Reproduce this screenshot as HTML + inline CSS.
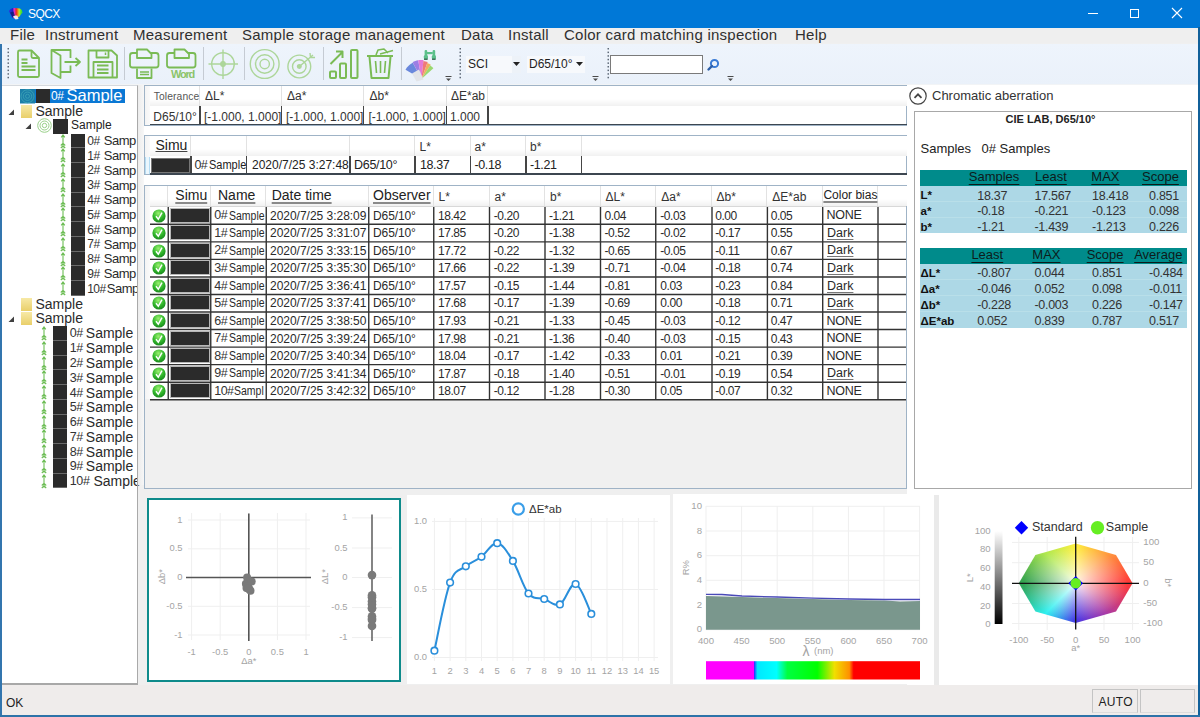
<!DOCTYPE html><html><head><meta charset='utf-8'><style>
*{margin:0;padding:0;box-sizing:border-box}
html,body{width:1200px;height:717px;overflow:hidden;background:#f0f0f0;font-family:"Liberation Sans",sans-serif}
.a{position:absolute}
.t{position:absolute;line-height:1;white-space:nowrap}
.u{text-decoration:underline}
svg{position:absolute;overflow:visible}
</style></head><body><div class="a" style="left:0px;top:0px;width:1200px;height:27.6px;background:#0078d7"></div>
<div class="t " style="left:28px;top:8.04px;font-size:12px;color:#fff;letter-spacing:-0.6px">SQCX</div>
<svg style="left:0;top:0" width="30" height="27" viewBox="0 0 30 27">
<defs><linearGradient id="tig" x1="8.5" x2="22.5" gradientUnits="userSpaceOnUse"><stop offset="0" stop-color="#2a3ae0"/><stop offset="0.3" stop-color="#2020c8"/><stop offset="0.4" stop-color="#e030d8"/><stop offset="0.55" stop-color="#e82828"/><stop offset="0.68" stop-color="#f09010"/><stop offset="0.76" stop-color="#c8e830"/><stop offset="0.9" stop-color="#40e030"/></linearGradient></defs>
<path d="M8.8 11 Q10 8.5 13 8 Q17 7.6 20 8.6 Q22.5 9.8 22.4 12.5 L19.5 16.5 L15.5 19 L12 17.5 Z" fill="url(#tig)"/>
<path d="M10 12.5 L13.5 11.5 L15 16 L12.5 17 Z" fill="#101a70" opacity="0.8"/>
<path d="M13 16.5 Q15.5 14.8 17.5 15.8 L18.5 19 L15.5 19.6 Z" fill="#f0ece8"/>
</svg>
<div class="a" style="left:1088px;top:13px;width:10px;height:1px;background:#fff"></div>
<div class="a" style="left:1129.5px;top:8.5px;width:9px;height:9px;border:1px solid #fff"></div>
<svg style="left:1172px;top:8px" width="10" height="10" viewBox="0 0 10 10"><path d="M0 0L10 10M10 0L0 10" stroke="#fff" stroke-width="1.1"/></svg>
<div class="a" style="left:0px;top:27.6px;width:1200px;height:15.9px;background:#efefef"></div>
<div class="a" style="left:0px;top:43.5px;width:1200px;height:41.5px;background:linear-gradient(180deg,#eef4fc,#eaf1fa)"></div>
<div class="a" style="left:0px;top:83.5px;width:1200px;height:1.5px;background:#f2f4f6"></div>
<svg style="left:6.5px;top:47px" width="3" height="32" viewBox="0 0 3 32"><rect x="0.5" y="1.0" width="1.5" height="1.5" fill="#5f6a78"/><rect x="0.5" y="4.6" width="1.5" height="1.5" fill="#5f6a78"/><rect x="0.5" y="8.2" width="1.5" height="1.5" fill="#5f6a78"/><rect x="0.5" y="11.8" width="1.5" height="1.5" fill="#5f6a78"/><rect x="0.5" y="15.4" width="1.5" height="1.5" fill="#5f6a78"/><rect x="0.5" y="19.0" width="1.5" height="1.5" fill="#5f6a78"/><rect x="0.5" y="22.6" width="1.5" height="1.5" fill="#5f6a78"/><rect x="0.5" y="26.2" width="1.5" height="1.5" fill="#5f6a78"/><rect x="0.5" y="29.8" width="1.5" height="1.5" fill="#5f6a78"/></svg>
<svg style="left:459px;top:47px" width="3" height="32" viewBox="0 0 3 32"><rect x="0.5" y="1.0" width="1.5" height="1.5" fill="#5f6a78"/><rect x="0.5" y="4.6" width="1.5" height="1.5" fill="#5f6a78"/><rect x="0.5" y="8.2" width="1.5" height="1.5" fill="#5f6a78"/><rect x="0.5" y="11.8" width="1.5" height="1.5" fill="#5f6a78"/><rect x="0.5" y="15.4" width="1.5" height="1.5" fill="#5f6a78"/><rect x="0.5" y="19.0" width="1.5" height="1.5" fill="#5f6a78"/><rect x="0.5" y="22.6" width="1.5" height="1.5" fill="#5f6a78"/><rect x="0.5" y="26.2" width="1.5" height="1.5" fill="#5f6a78"/><rect x="0.5" y="29.8" width="1.5" height="1.5" fill="#5f6a78"/></svg>
<svg style="left:606.5px;top:47px" width="3" height="32" viewBox="0 0 3 32"><rect x="0.5" y="1.0" width="1.5" height="1.5" fill="#5f6a78"/><rect x="0.5" y="4.6" width="1.5" height="1.5" fill="#5f6a78"/><rect x="0.5" y="8.2" width="1.5" height="1.5" fill="#5f6a78"/><rect x="0.5" y="11.8" width="1.5" height="1.5" fill="#5f6a78"/><rect x="0.5" y="15.4" width="1.5" height="1.5" fill="#5f6a78"/><rect x="0.5" y="19.0" width="1.5" height="1.5" fill="#5f6a78"/><rect x="0.5" y="22.6" width="1.5" height="1.5" fill="#5f6a78"/><rect x="0.5" y="26.2" width="1.5" height="1.5" fill="#5f6a78"/><rect x="0.5" y="29.8" width="1.5" height="1.5" fill="#5f6a78"/></svg>
<div class="a" style="left:124px;top:47px;width:1px;height:33px;background:#c5cbd3"></div>
<div class="a" style="left:202.5px;top:47px;width:1px;height:33px;background:#c5cbd3"></div>
<div class="a" style="left:243.5px;top:47px;width:1px;height:33px;background:#c5cbd3"></div>
<div class="a" style="left:322.5px;top:47px;width:1px;height:33px;background:#c5cbd3"></div>
<div class="a" style="left:401px;top:47px;width:1px;height:33px;background:#c5cbd3"></div>
<svg style="left:0;top:0" width="1200" height="85" viewBox="0 0 1200 85" fill="none" stroke="#7abb55" stroke-width="1.8" stroke-linejoin="round"><path d="M19.5 50.5 H31.5 L39 58 V75.5 Q39 77 37.5 77 H19.5 Q18 77 18 75.5 V52 Q18 50.5 19.5 50.5 Z"/><path d="M31.5 50.5 V56.5 Q31.5 58 33 58 H39"/><path d="M21.5 59.5 H27.5 M21.5 63 H27.5 M21.5 66.5 H35.5 M21.5 70 H35.5"/><path d="M51.5 50 H70.5 V58 M70.5 65.5 V72 H60.5"/><path d="M51.5 50 L60.5 55.5 V78 L51.5 73 Z"/><path d="M64.5 62 H80 M75.5 58 L80 62 L75.5 66"/><path d="M88.5 50.5 H111.5 L117 55.5 V77.5 H88.5 Z"/><path d="M96.5 50.5 V57.5 H108.5 V50.5"/><path d="M93.5 77.5 V62 H112.5 V77.5"/><path d="M97 65.5 H108.5 M97 69.5 H108.5 M97 73 H108.5"/><path d="M105.5 52.5 V55" stroke-width="1.5"/><rect x="130" y="53" width="28.5" height="14.5" rx="2.5"/><path d="M137 58 V49.5 H147 L151.5 54 V58 Z" fill="#eef3fa"/><path d="M137 68.5 V78 H151.5 V68.5"/><path d="M140 72 H149 M140 74.5 H149" stroke-width="1.3"/><rect x="167" y="53" width="28.5" height="14.5" rx="2.5"/><path d="M174.5 58 V49.5 H184.5 L189 54 V58 Z" fill="#eef3fa"/></svg>
<div class="t " style="left:171px;top:69.29px;font-size:11px;color:#8cc46a;font-weight:bold;letter-spacing:-1.2px">Word</div>
<svg style="left:0;top:0" width="1200" height="85" viewBox="0 0 1200 85" fill="none" stroke="#add69a" stroke-width="1.4"><circle cx="223" cy="64" r="11.3"/><path d="M208.5 64 H238 M223 49.5 V79"/><circle cx="223" cy="64" r="2.2" fill="#add69a"/><circle cx="264.7" cy="64" r="14.4"/><circle cx="264.7" cy="64" r="9.2"/><circle cx="264.7" cy="64" r="4.7"/><circle cx="299.3" cy="66.5" r="11.4"/><circle cx="299.3" cy="66.5" r="6.8"/><circle cx="299.3" cy="66.5" r="1.8" fill="#add69a"/><path d="M299.3 66.5 L313 55 M310 53 L310.5 57.5 L315 57.5"/></svg>
<svg style="left:0;top:0" width="1200" height="85" viewBox="0 0 1200 85" fill="none" stroke="#7abb55" stroke-width="2" stroke-linejoin="round"><rect x="330" y="71.5" width="6" height="6.5" rx="1"/><rect x="340" y="63.5" width="6" height="14.5" rx="1"/><rect x="351" y="50" width="6.5" height="28" rx="1"/><path d="M330.5 64 L342.5 52 M336 51.5 H342.5 V58"/><path d="M367 56 H393" /><path d="M376 55 L378 50 L384 49 L388 53 M380 54 L393 50.5" stroke-width="1.6"/><path d="M369.5 57 L371.5 78 H388.5 L390.5 57"/><path d="M375.5 61 L376.5 73 M380.5 61 V73 M385.5 61 L384.5 73" stroke-width="1.6"/></svg>
<svg style="left:0;top:0" width="1200" height="85" viewBox="0 0 1200 85"><path d="M421.5 79.0 L405.5 69.8 L406.9 67.6 L408.6 65.7 L410.6 64.0 L412.8 62.7 Z" fill="#6a88dc"/><path d="M421.5 79.0 L412.6 62.2 L413.9 61.6 L415.3 61.0 L416.7 60.6 L418.2 60.3 Z" fill="#9c7ee4"/><path d="M421.5 79.0 L418.2 60.3 L419.5 60.1 L420.8 60.0 L422.2 60.0 L423.5 60.1 Z" fill="#e47ad8"/><path d="M421.5 79.0 L423.4 61.1 L424.5 61.2 L425.5 61.5 L426.6 61.7 L427.7 62.1 Z" fill="#f0787a"/><path d="M421.5 79.0 L427.3 63.0 L428.2 63.4 L429.1 63.8 L429.9 64.2 L430.8 64.7 Z" fill="#f0b060"/><path d="M421.5 79.0 L430.2 65.6 L431.1 66.2 L431.9 66.8 L432.7 67.5 L433.4 68.3 Z" fill="#9ad870"/><path d="M412 73.5 L419 69.5 L423.5 79.5 L416.5 81.5 Z" fill="#e2e4e8"/><g fill="#5cc08a"><rect x="424.6" y="50" width="2.6" height="8" rx="1"/><rect x="432.6" y="50" width="2.6" height="8" rx="1"/><rect x="423.8" y="55" width="4.2" height="4.5" rx="1.6"/><rect x="431.8" y="55" width="4.2" height="4.5" rx="1.6"/><rect x="427" y="52" width="5.8" height="2.2"/></g><g fill="#2d5a48"><rect x="424" y="58.6" width="3.6" height="1.2"/><rect x="432" y="58.6" width="3.6" height="1.2"/></g></svg>
<svg style="left:444.7px;top:75px" width="7" height="7" viewBox="0 0 7 7"><path d="M0.5 1.5H6.5" stroke="#4a4a4a" stroke-width="1"/><path d="M1 3.5H6L3.5 6Z" fill="#4a4a4a"/></svg>
<svg style="left:592px;top:75px" width="7" height="7" viewBox="0 0 7 7"><path d="M0.5 1.5H6.5" stroke="#4a4a4a" stroke-width="1"/><path d="M1 3.5H6L3.5 6Z" fill="#4a4a4a"/></svg>
<svg style="left:727px;top:75px" width="7" height="7" viewBox="0 0 7 7"><path d="M0.5 1.5H6.5" stroke="#4a4a4a" stroke-width="1"/><path d="M1 3.5H6L3.5 6Z" fill="#4a4a4a"/></svg>
<div class="a" style="left:465.5px;top:55.5px;width:55px;height:17.5px;background:#f7f9fc"></div>
<div class="a" style="left:512px;top:55.5px;width:8.5px;height:17.5px;background:#edf2f8"></div>
<div class="t " style="left:468px;top:58.34px;font-size:12px;color:#1e1e1e;">SCI</div>
<svg style="left:513px;top:62px" width="7" height="4" viewBox="0 0 7 4"><path d="M0 0H7L3.5 4Z" fill="#222"/></svg>
<div class="a" style="left:527px;top:55.5px;width:57.5px;height:17.5px;background:#f7f9fc"></div>
<div class="t " style="left:529px;top:58.34px;font-size:12px;color:#1e1e1e;">D65/10°</div>
<svg style="left:576px;top:62px" width="7" height="4" viewBox="0 0 7 4"><path d="M0 0H7L3.5 4Z" fill="#222"/></svg>
<div class="a" style="left:610px;top:55px;width:92.5px;height:18.5px;background:#fff;border:1px solid #7a7a7a"></div>
<svg style="left:707px;top:58px" width="13" height="13" viewBox="0 0 13 13"><circle cx="7.5" cy="5.5" r="3.6" fill="none" stroke="#3a7bd5" stroke-width="2"/><path d="M5 8 L1.5 11.5" stroke="#2d5fa8" stroke-width="2.4" stroke-linecap="round"/></svg>
<div class="a" style="left:2px;top:85px;width:136px;height:600px;background:#fff;border-top:1px solid #d5d9de;border-right:1px solid #a9a9a9;border-bottom:2px solid #a8a8a8"></div>
<div class="a" style="left:19.5px;top:88.5px;width:105.5px;height:14.5px;background:#0a78d4"></div>
<svg style="left:20px;top:88.5px" width="15" height="14.5" viewBox="0 0 15 14.5" fill="none" stroke="#3aa0b5" stroke-width="0.9"><rect width="15" height="14.5" fill="#1b7fa8" stroke="none"/><circle cx="7.5" cy="7.25" r="6.5"/><circle cx="7.5" cy="7.25" r="4.2"/><circle cx="7.5" cy="7.25" r="2"/></svg>
<div class="a" style="left:35.5px;top:88.5px;width:14.5px;height:14.5px;background:#2b2b2b"></div>
<div class="t " style="left:51px;top:90.34px;font-size:12px;color:#fff;letter-spacing:-0.5px">0#</div>
<div class="t " style="left:66.5px;top:87.03px;font-size:16.5px;color:#fff;">Sample</div>
<svg style="left:7.5px;top:109px" width="7" height="7" viewBox="0 0 7 7"><path d="M6 0.5 V6 H0.5 Z" fill="#404040"/></svg>
<div class="a" style="left:20.5px;top:104.5px;width:11.5px;height:13px;background:linear-gradient(180deg,#f7e9a6,#e9cf6a)"></div>
<div class="t " style="left:35.5px;top:103.95px;font-size:14px;color:#2b2b2b;">Sample</div>
<svg style="left:24.5px;top:123px" width="7" height="7" viewBox="0 0 7 7"><path d="M6 0.5 V6 H0.5 Z" fill="#404040"/></svg>
<svg style="left:37px;top:118px" width="15" height="15" viewBox="0 0 15 15" fill="none" stroke="#9ad18a" stroke-width="1"><circle cx="7.5" cy="7.5" r="6.8"/><circle cx="7.5" cy="7.5" r="4.5"/><circle cx="7.5" cy="7.5" r="2.2"/></svg>
<div class="a" style="left:53px;top:119px;width:14.5px;height:14.5px;background:#2b2b2b"></div>
<div class="t " style="left:71px;top:119.34px;font-size:12px;color:#222;">Sample</div>
<svg style="left:59.5px;top:133.5px" width="6" height="15" viewBox="0 0 6 15" fill="none" stroke="#6dbd55" stroke-width="1.1"><path d="M3 1 V13.5 M1.2 3.3 L3 1 L4.8 3.3 M0.8 11.5 L3 9.3 L5.2 11.5 M0.8 14 L3 11.8 L5.2 14"/></svg>
<div class="a" style="left:70.5px;top:133.5px;width:14.3px;height:14.77px;background:#2b2b2b;border-bottom:1px solid #6a6a6a"></div>
<div class="t " style="left:87.3px;top:134.94px;font-size:12px;color:#333;letter-spacing:-0.4px">0#</div>
<div class="t " style="left:103.8px;top:134.30px;font-size:13px;color:#2a2a2a;letter-spacing:-0.5px">Samp</div>
<svg style="left:59.5px;top:148.27px" width="6" height="15" viewBox="0 0 6 15" fill="none" stroke="#6dbd55" stroke-width="1.1"><path d="M3 1 V13.5 M1.2 3.3 L3 1 L4.8 3.3 M0.8 11.5 L3 9.3 L5.2 11.5 M0.8 14 L3 11.8 L5.2 14"/></svg>
<div class="a" style="left:70.5px;top:148.27px;width:14.3px;height:14.77px;background:#2b2b2b;border-bottom:1px solid #6a6a6a"></div>
<div class="t " style="left:87.3px;top:149.71px;font-size:12px;color:#333;letter-spacing:-0.4px">1#</div>
<div class="t " style="left:103.8px;top:149.07px;font-size:13px;color:#2a2a2a;letter-spacing:-0.5px">Samp</div>
<svg style="left:59.5px;top:163.04px" width="6" height="15" viewBox="0 0 6 15" fill="none" stroke="#6dbd55" stroke-width="1.1"><path d="M3 1 V13.5 M1.2 3.3 L3 1 L4.8 3.3 M0.8 11.5 L3 9.3 L5.2 11.5 M0.8 14 L3 11.8 L5.2 14"/></svg>
<div class="a" style="left:70.5px;top:163.04px;width:14.3px;height:14.77px;background:#2b2b2b;border-bottom:1px solid #6a6a6a"></div>
<div class="t " style="left:87.3px;top:164.48px;font-size:12px;color:#333;letter-spacing:-0.4px">2#</div>
<div class="t " style="left:103.8px;top:163.84px;font-size:13px;color:#2a2a2a;letter-spacing:-0.5px">Samp</div>
<svg style="left:59.5px;top:177.81px" width="6" height="15" viewBox="0 0 6 15" fill="none" stroke="#6dbd55" stroke-width="1.1"><path d="M3 1 V13.5 M1.2 3.3 L3 1 L4.8 3.3 M0.8 11.5 L3 9.3 L5.2 11.5 M0.8 14 L3 11.8 L5.2 14"/></svg>
<div class="a" style="left:70.5px;top:177.81px;width:14.3px;height:14.77px;background:#2b2b2b;border-bottom:1px solid #6a6a6a"></div>
<div class="t " style="left:87.3px;top:179.25px;font-size:12px;color:#333;letter-spacing:-0.4px">3#</div>
<div class="t " style="left:103.8px;top:178.61px;font-size:13px;color:#2a2a2a;letter-spacing:-0.5px">Samp</div>
<svg style="left:59.5px;top:192.57999999999998px" width="6" height="15" viewBox="0 0 6 15" fill="none" stroke="#6dbd55" stroke-width="1.1"><path d="M3 1 V13.5 M1.2 3.3 L3 1 L4.8 3.3 M0.8 11.5 L3 9.3 L5.2 11.5 M0.8 14 L3 11.8 L5.2 14"/></svg>
<div class="a" style="left:70.5px;top:192.57999999999998px;width:14.3px;height:14.77px;background:#2b2b2b;border-bottom:1px solid #6a6a6a"></div>
<div class="t " style="left:87.3px;top:194.02px;font-size:12px;color:#333;letter-spacing:-0.4px">4#</div>
<div class="t " style="left:103.8px;top:193.38px;font-size:13px;color:#2a2a2a;letter-spacing:-0.5px">Samp</div>
<svg style="left:59.5px;top:207.35px" width="6" height="15" viewBox="0 0 6 15" fill="none" stroke="#6dbd55" stroke-width="1.1"><path d="M3 1 V13.5 M1.2 3.3 L3 1 L4.8 3.3 M0.8 11.5 L3 9.3 L5.2 11.5 M0.8 14 L3 11.8 L5.2 14"/></svg>
<div class="a" style="left:70.5px;top:207.35px;width:14.3px;height:14.77px;background:#2b2b2b;border-bottom:1px solid #6a6a6a"></div>
<div class="t " style="left:87.3px;top:208.79px;font-size:12px;color:#333;letter-spacing:-0.4px">5#</div>
<div class="t " style="left:103.8px;top:208.15px;font-size:13px;color:#2a2a2a;letter-spacing:-0.5px">Samp</div>
<svg style="left:59.5px;top:222.12px" width="6" height="15" viewBox="0 0 6 15" fill="none" stroke="#6dbd55" stroke-width="1.1"><path d="M3 1 V13.5 M1.2 3.3 L3 1 L4.8 3.3 M0.8 11.5 L3 9.3 L5.2 11.5 M0.8 14 L3 11.8 L5.2 14"/></svg>
<div class="a" style="left:70.5px;top:222.12px;width:14.3px;height:14.77px;background:#2b2b2b;border-bottom:1px solid #6a6a6a"></div>
<div class="t " style="left:87.3px;top:223.56px;font-size:12px;color:#333;letter-spacing:-0.4px">6#</div>
<div class="t " style="left:103.8px;top:222.92px;font-size:13px;color:#2a2a2a;letter-spacing:-0.5px">Samp</div>
<svg style="left:59.5px;top:236.89px" width="6" height="15" viewBox="0 0 6 15" fill="none" stroke="#6dbd55" stroke-width="1.1"><path d="M3 1 V13.5 M1.2 3.3 L3 1 L4.8 3.3 M0.8 11.5 L3 9.3 L5.2 11.5 M0.8 14 L3 11.8 L5.2 14"/></svg>
<div class="a" style="left:70.5px;top:236.89px;width:14.3px;height:14.77px;background:#2b2b2b;border-bottom:1px solid #6a6a6a"></div>
<div class="t " style="left:87.3px;top:238.33px;font-size:12px;color:#333;letter-spacing:-0.4px">7#</div>
<div class="t " style="left:103.8px;top:237.69px;font-size:13px;color:#2a2a2a;letter-spacing:-0.5px">Samp</div>
<svg style="left:59.5px;top:251.66px" width="6" height="15" viewBox="0 0 6 15" fill="none" stroke="#6dbd55" stroke-width="1.1"><path d="M3 1 V13.5 M1.2 3.3 L3 1 L4.8 3.3 M0.8 11.5 L3 9.3 L5.2 11.5 M0.8 14 L3 11.8 L5.2 14"/></svg>
<div class="a" style="left:70.5px;top:251.66px;width:14.3px;height:14.77px;background:#2b2b2b;border-bottom:1px solid #6a6a6a"></div>
<div class="t " style="left:87.3px;top:253.10px;font-size:12px;color:#333;letter-spacing:-0.4px">8#</div>
<div class="t " style="left:103.8px;top:252.46px;font-size:13px;color:#2a2a2a;letter-spacing:-0.5px">Samp</div>
<svg style="left:59.5px;top:266.43px" width="6" height="15" viewBox="0 0 6 15" fill="none" stroke="#6dbd55" stroke-width="1.1"><path d="M3 1 V13.5 M1.2 3.3 L3 1 L4.8 3.3 M0.8 11.5 L3 9.3 L5.2 11.5 M0.8 14 L3 11.8 L5.2 14"/></svg>
<div class="a" style="left:70.5px;top:266.43px;width:14.3px;height:14.77px;background:#2b2b2b;border-bottom:1px solid #6a6a6a"></div>
<div class="t " style="left:87.3px;top:267.87px;font-size:12px;color:#333;letter-spacing:-0.4px">9#</div>
<div class="t " style="left:103.8px;top:267.23px;font-size:13px;color:#2a2a2a;letter-spacing:-0.5px">Samp</div>
<svg style="left:59.5px;top:281.2px" width="6" height="15" viewBox="0 0 6 15" fill="none" stroke="#6dbd55" stroke-width="1.1"><path d="M3 1 V13.5 M1.2 3.3 L3 1 L4.8 3.3 M0.8 11.5 L3 9.3 L5.2 11.5 M0.8 14 L3 11.8 L5.2 14"/></svg>
<div class="a" style="left:70.5px;top:281.2px;width:14.3px;height:14.77px;background:#2b2b2b;border-bottom:1px solid #6a6a6a"></div>
<div class="t " style="left:87.3px;top:282.64px;font-size:12px;color:#333;letter-spacing:-0.6px">10#</div>
<div class="t " style="left:106.8px;top:282.00px;font-size:13px;color:#2a2a2a;letter-spacing:-0.5px">Samp</div>
<div class="a" style="left:20.5px;top:297.5px;width:11.5px;height:13px;background:linear-gradient(180deg,#f7e9a6,#e9cf6a)"></div>
<div class="t " style="left:35.5px;top:296.75px;font-size:14px;color:#2b2b2b;">Sample</div>
<svg style="left:7.5px;top:315.5px" width="7" height="7" viewBox="0 0 7 7"><path d="M6 0.5 V6 H0.5 Z" fill="#404040"/></svg>
<div class="a" style="left:20.5px;top:312px;width:11.5px;height:13px;background:linear-gradient(180deg,#f7e9a6,#e9cf6a)"></div>
<div class="t " style="left:35.5px;top:311.45px;font-size:14px;color:#2b2b2b;">Sample</div>
<svg style="left:41px;top:326.0px" width="6" height="15" viewBox="0 0 6 15" fill="none" stroke="#6dbd55" stroke-width="1.1"><path d="M3 1 V13.5 M1.2 3.3 L3 1 L4.8 3.3 M0.8 11.5 L3 9.3 L5.2 11.5 M0.8 14 L3 11.8 L5.2 14"/></svg>
<div class="a" style="left:53px;top:326.0px;width:14.3px;height:14.77px;background:#2b2b2b;border-bottom:1px solid #6a6a6a"></div>
<div class="t " style="left:69.8px;top:327.42px;font-size:12.5px;color:#333;letter-spacing:-0.4px">0#</div>
<div class="t " style="left:85.8px;top:326.45px;font-size:14px;color:#2a2a2a;">Sample</div>
<svg style="left:41px;top:340.77px" width="6" height="15" viewBox="0 0 6 15" fill="none" stroke="#6dbd55" stroke-width="1.1"><path d="M3 1 V13.5 M1.2 3.3 L3 1 L4.8 3.3 M0.8 11.5 L3 9.3 L5.2 11.5 M0.8 14 L3 11.8 L5.2 14"/></svg>
<div class="a" style="left:53px;top:340.77px;width:14.3px;height:14.77px;background:#2b2b2b;border-bottom:1px solid #6a6a6a"></div>
<div class="t " style="left:69.8px;top:342.19px;font-size:12.5px;color:#333;letter-spacing:-0.4px">1#</div>
<div class="t " style="left:85.8px;top:341.22px;font-size:14px;color:#2a2a2a;">Sample</div>
<svg style="left:41px;top:355.54px" width="6" height="15" viewBox="0 0 6 15" fill="none" stroke="#6dbd55" stroke-width="1.1"><path d="M3 1 V13.5 M1.2 3.3 L3 1 L4.8 3.3 M0.8 11.5 L3 9.3 L5.2 11.5 M0.8 14 L3 11.8 L5.2 14"/></svg>
<div class="a" style="left:53px;top:355.54px;width:14.3px;height:14.77px;background:#2b2b2b;border-bottom:1px solid #6a6a6a"></div>
<div class="t " style="left:69.8px;top:356.96px;font-size:12.5px;color:#333;letter-spacing:-0.4px">2#</div>
<div class="t " style="left:85.8px;top:355.99px;font-size:14px;color:#2a2a2a;">Sample</div>
<svg style="left:41px;top:370.31px" width="6" height="15" viewBox="0 0 6 15" fill="none" stroke="#6dbd55" stroke-width="1.1"><path d="M3 1 V13.5 M1.2 3.3 L3 1 L4.8 3.3 M0.8 11.5 L3 9.3 L5.2 11.5 M0.8 14 L3 11.8 L5.2 14"/></svg>
<div class="a" style="left:53px;top:370.31px;width:14.3px;height:14.77px;background:#2b2b2b;border-bottom:1px solid #6a6a6a"></div>
<div class="t " style="left:69.8px;top:371.73px;font-size:12.5px;color:#333;letter-spacing:-0.4px">3#</div>
<div class="t " style="left:85.8px;top:370.76px;font-size:14px;color:#2a2a2a;">Sample</div>
<svg style="left:41px;top:385.08px" width="6" height="15" viewBox="0 0 6 15" fill="none" stroke="#6dbd55" stroke-width="1.1"><path d="M3 1 V13.5 M1.2 3.3 L3 1 L4.8 3.3 M0.8 11.5 L3 9.3 L5.2 11.5 M0.8 14 L3 11.8 L5.2 14"/></svg>
<div class="a" style="left:53px;top:385.08px;width:14.3px;height:14.77px;background:#2b2b2b;border-bottom:1px solid #6a6a6a"></div>
<div class="t " style="left:69.8px;top:386.50px;font-size:12.5px;color:#333;letter-spacing:-0.4px">4#</div>
<div class="t " style="left:85.8px;top:385.53px;font-size:14px;color:#2a2a2a;">Sample</div>
<svg style="left:41px;top:399.85px" width="6" height="15" viewBox="0 0 6 15" fill="none" stroke="#6dbd55" stroke-width="1.1"><path d="M3 1 V13.5 M1.2 3.3 L3 1 L4.8 3.3 M0.8 11.5 L3 9.3 L5.2 11.5 M0.8 14 L3 11.8 L5.2 14"/></svg>
<div class="a" style="left:53px;top:399.85px;width:14.3px;height:14.77px;background:#2b2b2b;border-bottom:1px solid #6a6a6a"></div>
<div class="t " style="left:69.8px;top:401.27px;font-size:12.5px;color:#333;letter-spacing:-0.4px">5#</div>
<div class="t " style="left:85.8px;top:400.30px;font-size:14px;color:#2a2a2a;">Sample</div>
<svg style="left:41px;top:414.62px" width="6" height="15" viewBox="0 0 6 15" fill="none" stroke="#6dbd55" stroke-width="1.1"><path d="M3 1 V13.5 M1.2 3.3 L3 1 L4.8 3.3 M0.8 11.5 L3 9.3 L5.2 11.5 M0.8 14 L3 11.8 L5.2 14"/></svg>
<div class="a" style="left:53px;top:414.62px;width:14.3px;height:14.77px;background:#2b2b2b;border-bottom:1px solid #6a6a6a"></div>
<div class="t " style="left:69.8px;top:416.04px;font-size:12.5px;color:#333;letter-spacing:-0.4px">6#</div>
<div class="t " style="left:85.8px;top:415.07px;font-size:14px;color:#2a2a2a;">Sample</div>
<svg style="left:41px;top:429.39px" width="6" height="15" viewBox="0 0 6 15" fill="none" stroke="#6dbd55" stroke-width="1.1"><path d="M3 1 V13.5 M1.2 3.3 L3 1 L4.8 3.3 M0.8 11.5 L3 9.3 L5.2 11.5 M0.8 14 L3 11.8 L5.2 14"/></svg>
<div class="a" style="left:53px;top:429.39px;width:14.3px;height:14.77px;background:#2b2b2b;border-bottom:1px solid #6a6a6a"></div>
<div class="t " style="left:69.8px;top:430.81px;font-size:12.5px;color:#333;letter-spacing:-0.4px">7#</div>
<div class="t " style="left:85.8px;top:429.84px;font-size:14px;color:#2a2a2a;">Sample</div>
<svg style="left:41px;top:444.15999999999997px" width="6" height="15" viewBox="0 0 6 15" fill="none" stroke="#6dbd55" stroke-width="1.1"><path d="M3 1 V13.5 M1.2 3.3 L3 1 L4.8 3.3 M0.8 11.5 L3 9.3 L5.2 11.5 M0.8 14 L3 11.8 L5.2 14"/></svg>
<div class="a" style="left:53px;top:444.15999999999997px;width:14.3px;height:14.77px;background:#2b2b2b;border-bottom:1px solid #6a6a6a"></div>
<div class="t " style="left:69.8px;top:445.58px;font-size:12.5px;color:#333;letter-spacing:-0.4px">8#</div>
<div class="t " style="left:85.8px;top:444.61px;font-size:14px;color:#2a2a2a;">Sample</div>
<svg style="left:41px;top:458.93px" width="6" height="15" viewBox="0 0 6 15" fill="none" stroke="#6dbd55" stroke-width="1.1"><path d="M3 1 V13.5 M1.2 3.3 L3 1 L4.8 3.3 M0.8 11.5 L3 9.3 L5.2 11.5 M0.8 14 L3 11.8 L5.2 14"/></svg>
<div class="a" style="left:53px;top:458.93px;width:14.3px;height:14.77px;background:#2b2b2b;border-bottom:1px solid #6a6a6a"></div>
<div class="t " style="left:69.8px;top:460.35px;font-size:12.5px;color:#333;letter-spacing:-0.4px">9#</div>
<div class="t " style="left:85.8px;top:459.38px;font-size:14px;color:#2a2a2a;">Sample</div>
<svg style="left:41px;top:473.7px" width="6" height="15" viewBox="0 0 6 15" fill="none" stroke="#6dbd55" stroke-width="1.1"><path d="M3 1 V13.5 M1.2 3.3 L3 1 L4.8 3.3 M0.8 11.5 L3 9.3 L5.2 11.5 M0.8 14 L3 11.8 L5.2 14"/></svg>
<div class="a" style="left:53px;top:473.7px;width:14.3px;height:14.77px;background:#2b2b2b;border-bottom:1px solid #6a6a6a"></div>
<div class="t " style="left:69.8px;top:475.12px;font-size:12.5px;color:#333;letter-spacing:-0.4px">10#</div>
<div class="t " style="left:93.4px;top:474.15px;font-size:14px;color:#2a2a2a;">Sample</div>
<div class="a" style="left:137px;top:86px;width:1px;height:598px;background:#a9a9a9"></div>
<div class="a" style="left:138px;top:85px;width:769px;height:400px;background:#fff"></div>
<div class="a" style="left:138px;top:85px;width:5.5px;height:400px;background:linear-gradient(90deg,#ececec,#f7f7f7)"></div>
<div class="a" style="left:143.5px;top:85.25px;width:763.5px;height:40.25px;background:#fff;border:1px solid #9fb3c6"></div>
<div class="a" style="left:144.5px;top:86.25px;width:5.5px;height:38.25px;background:linear-gradient(90deg,#f4f4f4,#fafafa)"></div>
<div class="a" style="left:150px;top:86.25px;width:757px;height:19.75px;background:linear-gradient(180deg,#fff 65%,#f1f1f1)"></div>
<div class="a" style="left:199.4px;top:86.25px;width:1px;height:19.75px;background:#e2e2e2"></div>
<div class="a" style="left:199.4px;top:106px;width:1.3px;height:18.5px;background:#454545"></div>
<div class="a" style="left:280.7px;top:86.25px;width:1px;height:19.75px;background:#e2e2e2"></div>
<div class="a" style="left:280.7px;top:106px;width:1.3px;height:18.5px;background:#454545"></div>
<div class="a" style="left:363px;top:86.25px;width:1px;height:19.75px;background:#e2e2e2"></div>
<div class="a" style="left:363px;top:106px;width:1.3px;height:18.5px;background:#454545"></div>
<div class="a" style="left:445.7px;top:86.25px;width:1px;height:19.75px;background:#e2e2e2"></div>
<div class="a" style="left:445.7px;top:106px;width:1.3px;height:18.5px;background:#454545"></div>
<div class="a" style="left:487.3px;top:86.25px;width:1px;height:19.75px;background:#e2e2e2"></div>
<div class="a" style="left:487.3px;top:106px;width:1.3px;height:18.5px;background:#454545"></div>
<div class="a" style="left:150px;top:123.5px;width:757px;height:1.5px;background:#3c4650"></div>
<div class="t " style="left:153.8px;top:91.68px;font-size:10.3px;color:#555;letter-spacing:0.1px">Tolerance</div>
<div class="t " style="left:205px;top:90.24px;font-size:12px;color:#333;">ΔL*</div>
<div class="t " style="left:287px;top:90.24px;font-size:12px;color:#333;">Δa*</div>
<div class="t " style="left:369.5px;top:90.24px;font-size:12px;color:#333;">Δb*</div>
<div class="t " style="left:451px;top:90.24px;font-size:12px;color:#333;">ΔE*ab</div>
<div class="t " style="left:153.3px;top:110.64px;font-size:12px;color:#333;">D65/10°</div>
<div class="t " style="left:204px;top:110.64px;font-size:12px;color:#333;">[-1.000, 1.000]</div>
<div class="t " style="left:286px;top:110.64px;font-size:12px;color:#333;">[-1.000, 1.000]</div>
<div class="t " style="left:368.5px;top:110.64px;font-size:12px;color:#333;">[-1.000, 1.000]</div>
<div class="t " style="left:450px;top:110.64px;font-size:12px;color:#333;">1.000</div>
<div class="a" style="left:143.5px;top:135.3px;width:763.5px;height:40px;background:#fff;border:1px solid #9fb3c6"></div>
<div class="a" style="left:144.5px;top:136.3px;width:5.5px;height:38px;background:linear-gradient(90deg,#f4f4f4,#fafafa)"></div>
<div class="a" style="left:150px;top:136.3px;width:757px;height:20px;background:linear-gradient(180deg,#fff 65%,#f1f1f1)"></div>
<div class="a" style="left:190.3px;top:136.3px;width:1px;height:20px;background:#e2e2e2"></div>
<div class="a" style="left:190.3px;top:156.3px;width:1.3px;height:18px;background:#454545"></div>
<div class="a" style="left:246.2px;top:136.3px;width:1px;height:20px;background:#e2e2e2"></div>
<div class="a" style="left:246.2px;top:156.3px;width:1.3px;height:18px;background:#454545"></div>
<div class="a" style="left:349.3px;top:136.3px;width:1px;height:20px;background:#e2e2e2"></div>
<div class="a" style="left:349.3px;top:156.3px;width:1.3px;height:18px;background:#454545"></div>
<div class="a" style="left:414.3px;top:136.3px;width:1px;height:20px;background:#e2e2e2"></div>
<div class="a" style="left:414.3px;top:156.3px;width:1.3px;height:18px;background:#454545"></div>
<div class="a" style="left:469.8px;top:136.3px;width:1px;height:20px;background:#e2e2e2"></div>
<div class="a" style="left:469.8px;top:156.3px;width:1.3px;height:18px;background:#454545"></div>
<div class="a" style="left:525.3px;top:136.3px;width:1px;height:20px;background:#e2e2e2"></div>
<div class="a" style="left:525.3px;top:156.3px;width:1.3px;height:18px;background:#454545"></div>
<div class="a" style="left:580.7px;top:136.3px;width:1px;height:20px;background:#e2e2e2"></div>
<div class="a" style="left:580.7px;top:156.3px;width:1.3px;height:18px;background:#454545"></div>
<div class="a" style="left:150px;top:173.3px;width:757px;height:1.5px;background:#3c4650"></div>
<div class="t " style="left:155.5px;top:138.45px;font-size:14px;color:#222;text-decoration:underline;text-decoration-color:#444;text-decoration-thickness:1px;text-underline-offset:1.4px">Simu</div>
<div class="a" style="left:144.5px;top:156.5px;width:5.5px;height:17.5px;background:#eaf6fd;border-left:1px solid #b5dcf3;border-right:1px solid #b5dcf3"></div>
<div class="a" style="left:151px;top:157.5px;width:39px;height:15px;background:#2b2b2b;border:1px solid #777"></div>
<div class="t " style="left:194.5px;top:158.72px;font-size:12.5px;color:#333;letter-spacing:-0.6px">0#</div>
<div class="t " style="left:208.5px;top:158.92px;font-size:12.5px;color:#222;transform:scaleX(0.88);transform-origin:left">Sample</div>
<div class="t " style="left:252px;top:159.24px;font-size:12px;color:#222;letter-spacing:0px">2020/7/25 3:27:48</div>
<div class="t " style="left:354px;top:158.82px;font-size:12.5px;color:#222;letter-spacing:-0.3px">D65/10°</div>
<div class="t " style="left:420px;top:158.82px;font-size:12.5px;color:#222;letter-spacing:-0.4px">18.37</div>
<div class="t " style="left:474.5px;top:158.82px;font-size:12.5px;color:#222;letter-spacing:-0.4px">-0.18</div>
<div class="t " style="left:530px;top:158.82px;font-size:12.5px;color:#222;letter-spacing:-0.4px">-1.21</div>
<div class="t " style="left:419.5px;top:140.84px;font-size:12px;color:#333;">L*</div>
<div class="t " style="left:474.5px;top:140.84px;font-size:12px;color:#333;">a*</div>
<div class="t " style="left:530px;top:140.84px;font-size:12px;color:#333;">b*</div>
<div class="a" style="left:143.5px;top:185px;width:763.5px;height:303.5px;background:#f0f0f0;border:1px solid #9fb3c6"></div>
<div class="a" style="left:144.5px;top:186px;width:762.5px;height:20.4px;background:linear-gradient(180deg,#fff 65%,#f1f1f1)"></div>
<div class="a" style="left:144.5px;top:186px;width:5.5px;height:213px;background:linear-gradient(90deg,#f4f4f4,#fafafa)"></div>
<div class="a" style="left:167.25px;top:186px;width:1px;height:20.4px;background:#e2e2e2"></div>
<div class="a" style="left:209.75px;top:186px;width:1px;height:20.4px;background:#e2e2e2"></div>
<div class="a" style="left:265.25px;top:186px;width:1px;height:20.4px;background:#e2e2e2"></div>
<div class="a" style="left:367.75px;top:186px;width:1px;height:20.4px;background:#e2e2e2"></div>
<div class="a" style="left:432.75px;top:186px;width:1px;height:20.4px;background:#e2e2e2"></div>
<div class="a" style="left:488.5px;top:186px;width:1px;height:20.4px;background:#e2e2e2"></div>
<div class="a" style="left:544px;top:186px;width:1px;height:20.4px;background:#e2e2e2"></div>
<div class="a" style="left:599.5px;top:186px;width:1px;height:20.4px;background:#e2e2e2"></div>
<div class="a" style="left:654.75px;top:186px;width:1px;height:20.4px;background:#e2e2e2"></div>
<div class="a" style="left:711px;top:186px;width:1px;height:20.4px;background:#e2e2e2"></div>
<div class="a" style="left:766.4px;top:186px;width:1px;height:20.4px;background:#e2e2e2"></div>
<div class="a" style="left:821.7px;top:186px;width:1px;height:20.4px;background:#e2e2e2"></div>
<div class="a" style="left:877px;top:186px;width:1px;height:20.4px;background:#e2e2e2"></div>
<div class="a" style="left:150px;top:206.4px;width:756px;height:192.995px;background:#fff"></div>
<svg style="left:152px;top:208.7px" width="14" height="14" viewBox="0 0 14 14"><defs><radialGradient id="g0" cx="0.45" cy="0.3" r="0.75"><stop offset="0" stop-color="#9af070"/><stop offset="0.55" stop-color="#32b82c"/><stop offset="1" stop-color="#15801a"/></radialGradient></defs><circle cx="7" cy="7" r="6.6" fill="url(#g0)"/><path d="M4 7.2 L6.3 10.2 L10 3.6" fill="none" stroke="#fff" stroke-width="1.4"/></svg>
<div class="a" style="left:169.5px;top:207.70000000000002px;width:40px;height:15px;background:#2b2b2b;border:1px solid #b8b8b8"></div>
<div class="t " style="left:214.3px;top:209.32px;font-size:12.5px;color:#333;letter-spacing:-0.6px">0#</div>
<div class="t " style="left:229.3px;top:209.52px;font-size:12.5px;color:#2a2a2a;transform:scaleX(0.84);transform-origin:left">Sample</div>
<div class="t " style="left:270px;top:209.74px;font-size:12px;color:#2a2a2a;letter-spacing:-0.02px">2020/7/25 3:28:09</div>
<div class="t " style="left:373px;top:209.74px;font-size:12px;color:#2a2a2a;letter-spacing:-0.1px">D65/10°</div>
<div class="t " style="left:438px;top:209.74px;font-size:12px;color:#2a2a2a;letter-spacing:-0.45px">18.42</div>
<div class="t " style="left:493.8px;top:209.74px;font-size:12px;color:#2a2a2a;letter-spacing:-0.45px">-0.20</div>
<div class="t " style="left:549px;top:209.74px;font-size:12px;color:#2a2a2a;letter-spacing:-0.45px">-1.21</div>
<div class="t " style="left:604.5px;top:209.74px;font-size:12px;color:#2a2a2a;letter-spacing:-0.45px">0.04</div>
<div class="t " style="left:660.3px;top:209.74px;font-size:12px;color:#2a2a2a;letter-spacing:-0.45px">-0.03</div>
<div class="t " style="left:715.2px;top:209.74px;font-size:12px;color:#2a2a2a;letter-spacing:-0.45px">0.00</div>
<div class="t " style="left:770.7px;top:209.74px;font-size:12px;color:#2a2a2a;letter-spacing:-0.45px">0.05</div>
<div class="t " style="left:826.5px;top:209.32px;font-size:12.5px;color:#2a2a2a;letter-spacing:-0.3px">NONE</div>
<svg style="left:152px;top:226.2px" width="14" height="14" viewBox="0 0 14 14"><defs><radialGradient id="g1" cx="0.45" cy="0.3" r="0.75"><stop offset="0" stop-color="#9af070"/><stop offset="0.55" stop-color="#32b82c"/><stop offset="1" stop-color="#15801a"/></radialGradient></defs><circle cx="7" cy="7" r="6.6" fill="url(#g1)"/><path d="M4 7.2 L6.3 10.2 L10 3.6" fill="none" stroke="#fff" stroke-width="1.4"/></svg>
<div class="a" style="left:169.5px;top:225.245px;width:40px;height:15px;background:#2b2b2b;border:1px solid #b8b8b8"></div>
<div class="t " style="left:214.3px;top:226.86px;font-size:12.5px;color:#333;letter-spacing:-0.6px">1#</div>
<div class="t " style="left:229.3px;top:227.06px;font-size:12.5px;color:#2a2a2a;transform:scaleX(0.84);transform-origin:left">Sample</div>
<div class="t " style="left:270px;top:227.29px;font-size:12px;color:#2a2a2a;letter-spacing:-0.02px">2020/7/25 3:31:07</div>
<div class="t " style="left:373px;top:227.29px;font-size:12px;color:#2a2a2a;letter-spacing:-0.1px">D65/10°</div>
<div class="t " style="left:438px;top:227.29px;font-size:12px;color:#2a2a2a;letter-spacing:-0.45px">17.85</div>
<div class="t " style="left:493.8px;top:227.29px;font-size:12px;color:#2a2a2a;letter-spacing:-0.45px">-0.20</div>
<div class="t " style="left:549px;top:227.29px;font-size:12px;color:#2a2a2a;letter-spacing:-0.45px">-1.38</div>
<div class="t " style="left:604.5px;top:227.29px;font-size:12px;color:#2a2a2a;letter-spacing:-0.45px">-0.52</div>
<div class="t " style="left:660.3px;top:227.29px;font-size:12px;color:#2a2a2a;letter-spacing:-0.45px">-0.02</div>
<div class="t " style="left:715.2px;top:227.29px;font-size:12px;color:#2a2a2a;letter-spacing:-0.45px">-0.17</div>
<div class="t " style="left:770.7px;top:227.29px;font-size:12px;color:#2a2a2a;letter-spacing:-0.45px">0.55</div>
<div class="t " style="left:827px;top:226.86px;font-size:12.5px;color:#2a2a2a;text-decoration:underline;text-decoration-color:#777;text-underline-offset:1.5px">Dark</div>
<svg style="left:152px;top:243.8px" width="14" height="14" viewBox="0 0 14 14"><defs><radialGradient id="g2" cx="0.45" cy="0.3" r="0.75"><stop offset="0" stop-color="#9af070"/><stop offset="0.55" stop-color="#32b82c"/><stop offset="1" stop-color="#15801a"/></radialGradient></defs><circle cx="7" cy="7" r="6.6" fill="url(#g2)"/><path d="M4 7.2 L6.3 10.2 L10 3.6" fill="none" stroke="#fff" stroke-width="1.4"/></svg>
<div class="a" style="left:169.5px;top:242.79000000000002px;width:40px;height:15px;background:#2b2b2b;border:1px solid #b8b8b8"></div>
<div class="t " style="left:214.3px;top:244.41px;font-size:12.5px;color:#333;letter-spacing:-0.6px">2#</div>
<div class="t " style="left:229.3px;top:244.61px;font-size:12.5px;color:#2a2a2a;transform:scaleX(0.84);transform-origin:left">Sample</div>
<div class="t " style="left:270px;top:244.83px;font-size:12px;color:#2a2a2a;letter-spacing:-0.02px">2020/7/25 3:33:15</div>
<div class="t " style="left:373px;top:244.83px;font-size:12px;color:#2a2a2a;letter-spacing:-0.1px">D65/10°</div>
<div class="t " style="left:438px;top:244.83px;font-size:12px;color:#2a2a2a;letter-spacing:-0.45px">17.72</div>
<div class="t " style="left:493.8px;top:244.83px;font-size:12px;color:#2a2a2a;letter-spacing:-0.45px">-0.22</div>
<div class="t " style="left:549px;top:244.83px;font-size:12px;color:#2a2a2a;letter-spacing:-0.45px">-1.32</div>
<div class="t " style="left:604.5px;top:244.83px;font-size:12px;color:#2a2a2a;letter-spacing:-0.45px">-0.65</div>
<div class="t " style="left:660.3px;top:244.83px;font-size:12px;color:#2a2a2a;letter-spacing:-0.45px">-0.05</div>
<div class="t " style="left:715.2px;top:244.83px;font-size:12px;color:#2a2a2a;letter-spacing:-0.45px">-0.11</div>
<div class="t " style="left:770.7px;top:244.83px;font-size:12px;color:#2a2a2a;letter-spacing:-0.45px">0.67</div>
<div class="t " style="left:827px;top:244.41px;font-size:12.5px;color:#2a2a2a;text-decoration:underline;text-decoration-color:#777;text-underline-offset:1.5px">Dark</div>
<svg style="left:152px;top:261.3px" width="14" height="14" viewBox="0 0 14 14"><defs><radialGradient id="g3" cx="0.45" cy="0.3" r="0.75"><stop offset="0" stop-color="#9af070"/><stop offset="0.55" stop-color="#32b82c"/><stop offset="1" stop-color="#15801a"/></radialGradient></defs><circle cx="7" cy="7" r="6.6" fill="url(#g3)"/><path d="M4 7.2 L6.3 10.2 L10 3.6" fill="none" stroke="#fff" stroke-width="1.4"/></svg>
<div class="a" style="left:169.5px;top:260.33500000000004px;width:40px;height:15px;background:#2b2b2b;border:1px solid #b8b8b8"></div>
<div class="t " style="left:214.3px;top:261.95px;font-size:12.5px;color:#333;letter-spacing:-0.6px">3#</div>
<div class="t " style="left:229.3px;top:262.15px;font-size:12.5px;color:#2a2a2a;transform:scaleX(0.84);transform-origin:left">Sample</div>
<div class="t " style="left:270px;top:262.38px;font-size:12px;color:#2a2a2a;letter-spacing:-0.02px">2020/7/25 3:35:30</div>
<div class="t " style="left:373px;top:262.38px;font-size:12px;color:#2a2a2a;letter-spacing:-0.1px">D65/10°</div>
<div class="t " style="left:438px;top:262.38px;font-size:12px;color:#2a2a2a;letter-spacing:-0.45px">17.66</div>
<div class="t " style="left:493.8px;top:262.38px;font-size:12px;color:#2a2a2a;letter-spacing:-0.45px">-0.22</div>
<div class="t " style="left:549px;top:262.38px;font-size:12px;color:#2a2a2a;letter-spacing:-0.45px">-1.39</div>
<div class="t " style="left:604.5px;top:262.38px;font-size:12px;color:#2a2a2a;letter-spacing:-0.45px">-0.71</div>
<div class="t " style="left:660.3px;top:262.38px;font-size:12px;color:#2a2a2a;letter-spacing:-0.45px">-0.04</div>
<div class="t " style="left:715.2px;top:262.38px;font-size:12px;color:#2a2a2a;letter-spacing:-0.45px">-0.18</div>
<div class="t " style="left:770.7px;top:262.38px;font-size:12px;color:#2a2a2a;letter-spacing:-0.45px">0.74</div>
<div class="t " style="left:827px;top:261.95px;font-size:12.5px;color:#2a2a2a;text-decoration:underline;text-decoration-color:#777;text-underline-offset:1.5px">Dark</div>
<svg style="left:152px;top:278.9px" width="14" height="14" viewBox="0 0 14 14"><defs><radialGradient id="g4" cx="0.45" cy="0.3" r="0.75"><stop offset="0" stop-color="#9af070"/><stop offset="0.55" stop-color="#32b82c"/><stop offset="1" stop-color="#15801a"/></radialGradient></defs><circle cx="7" cy="7" r="6.6" fill="url(#g4)"/><path d="M4 7.2 L6.3 10.2 L10 3.6" fill="none" stroke="#fff" stroke-width="1.4"/></svg>
<div class="a" style="left:169.5px;top:277.88000000000005px;width:40px;height:15px;background:#2b2b2b;border:1px solid #b8b8b8"></div>
<div class="t " style="left:214.3px;top:279.50px;font-size:12.5px;color:#333;letter-spacing:-0.6px">4#</div>
<div class="t " style="left:229.3px;top:279.70px;font-size:12.5px;color:#2a2a2a;transform:scaleX(0.84);transform-origin:left">Sample</div>
<div class="t " style="left:270px;top:279.92px;font-size:12px;color:#2a2a2a;letter-spacing:-0.02px">2020/7/25 3:36:41</div>
<div class="t " style="left:373px;top:279.92px;font-size:12px;color:#2a2a2a;letter-spacing:-0.1px">D65/10°</div>
<div class="t " style="left:438px;top:279.92px;font-size:12px;color:#2a2a2a;letter-spacing:-0.45px">17.57</div>
<div class="t " style="left:493.8px;top:279.92px;font-size:12px;color:#2a2a2a;letter-spacing:-0.45px">-0.15</div>
<div class="t " style="left:549px;top:279.92px;font-size:12px;color:#2a2a2a;letter-spacing:-0.45px">-1.44</div>
<div class="t " style="left:604.5px;top:279.92px;font-size:12px;color:#2a2a2a;letter-spacing:-0.45px">-0.81</div>
<div class="t " style="left:660.3px;top:279.92px;font-size:12px;color:#2a2a2a;letter-spacing:-0.45px">0.03</div>
<div class="t " style="left:715.2px;top:279.92px;font-size:12px;color:#2a2a2a;letter-spacing:-0.45px">-0.23</div>
<div class="t " style="left:770.7px;top:279.92px;font-size:12px;color:#2a2a2a;letter-spacing:-0.45px">0.84</div>
<div class="t " style="left:827px;top:279.50px;font-size:12.5px;color:#2a2a2a;text-decoration:underline;text-decoration-color:#777;text-underline-offset:1.5px">Dark</div>
<svg style="left:152px;top:296.4px" width="14" height="14" viewBox="0 0 14 14"><defs><radialGradient id="g5" cx="0.45" cy="0.3" r="0.75"><stop offset="0" stop-color="#9af070"/><stop offset="0.55" stop-color="#32b82c"/><stop offset="1" stop-color="#15801a"/></radialGradient></defs><circle cx="7" cy="7" r="6.6" fill="url(#g5)"/><path d="M4 7.2 L6.3 10.2 L10 3.6" fill="none" stroke="#fff" stroke-width="1.4"/></svg>
<div class="a" style="left:169.5px;top:295.425px;width:40px;height:15px;background:#2b2b2b;border:1px solid #b8b8b8"></div>
<div class="t " style="left:214.3px;top:297.04px;font-size:12.5px;color:#333;letter-spacing:-0.6px">5#</div>
<div class="t " style="left:229.3px;top:297.24px;font-size:12.5px;color:#2a2a2a;transform:scaleX(0.84);transform-origin:left">Sample</div>
<div class="t " style="left:270px;top:297.47px;font-size:12px;color:#2a2a2a;letter-spacing:-0.02px">2020/7/25 3:37:41</div>
<div class="t " style="left:373px;top:297.47px;font-size:12px;color:#2a2a2a;letter-spacing:-0.1px">D65/10°</div>
<div class="t " style="left:438px;top:297.47px;font-size:12px;color:#2a2a2a;letter-spacing:-0.45px">17.68</div>
<div class="t " style="left:493.8px;top:297.47px;font-size:12px;color:#2a2a2a;letter-spacing:-0.45px">-0.17</div>
<div class="t " style="left:549px;top:297.47px;font-size:12px;color:#2a2a2a;letter-spacing:-0.45px">-1.39</div>
<div class="t " style="left:604.5px;top:297.47px;font-size:12px;color:#2a2a2a;letter-spacing:-0.45px">-0.69</div>
<div class="t " style="left:660.3px;top:297.47px;font-size:12px;color:#2a2a2a;letter-spacing:-0.45px">0.00</div>
<div class="t " style="left:715.2px;top:297.47px;font-size:12px;color:#2a2a2a;letter-spacing:-0.45px">-0.18</div>
<div class="t " style="left:770.7px;top:297.47px;font-size:12px;color:#2a2a2a;letter-spacing:-0.45px">0.71</div>
<div class="t " style="left:827px;top:297.04px;font-size:12.5px;color:#2a2a2a;text-decoration:underline;text-decoration-color:#777;text-underline-offset:1.5px">Dark</div>
<svg style="left:152px;top:314.0px" width="14" height="14" viewBox="0 0 14 14"><defs><radialGradient id="g6" cx="0.45" cy="0.3" r="0.75"><stop offset="0" stop-color="#9af070"/><stop offset="0.55" stop-color="#32b82c"/><stop offset="1" stop-color="#15801a"/></radialGradient></defs><circle cx="7" cy="7" r="6.6" fill="url(#g6)"/><path d="M4 7.2 L6.3 10.2 L10 3.6" fill="none" stroke="#fff" stroke-width="1.4"/></svg>
<div class="a" style="left:169.5px;top:312.97px;width:40px;height:15px;background:#2b2b2b;border:1px solid #b8b8b8"></div>
<div class="t " style="left:214.3px;top:314.59px;font-size:12.5px;color:#333;letter-spacing:-0.6px">6#</div>
<div class="t " style="left:229.3px;top:314.79px;font-size:12.5px;color:#2a2a2a;transform:scaleX(0.84);transform-origin:left">Sample</div>
<div class="t " style="left:270px;top:315.01px;font-size:12px;color:#2a2a2a;letter-spacing:-0.02px">2020/7/25 3:38:50</div>
<div class="t " style="left:373px;top:315.01px;font-size:12px;color:#2a2a2a;letter-spacing:-0.1px">D65/10°</div>
<div class="t " style="left:438px;top:315.01px;font-size:12px;color:#2a2a2a;letter-spacing:-0.45px">17.93</div>
<div class="t " style="left:493.8px;top:315.01px;font-size:12px;color:#2a2a2a;letter-spacing:-0.45px">-0.21</div>
<div class="t " style="left:549px;top:315.01px;font-size:12px;color:#2a2a2a;letter-spacing:-0.45px">-1.33</div>
<div class="t " style="left:604.5px;top:315.01px;font-size:12px;color:#2a2a2a;letter-spacing:-0.45px">-0.45</div>
<div class="t " style="left:660.3px;top:315.01px;font-size:12px;color:#2a2a2a;letter-spacing:-0.45px">-0.03</div>
<div class="t " style="left:715.2px;top:315.01px;font-size:12px;color:#2a2a2a;letter-spacing:-0.45px">-0.12</div>
<div class="t " style="left:770.7px;top:315.01px;font-size:12px;color:#2a2a2a;letter-spacing:-0.45px">0.47</div>
<div class="t " style="left:826.5px;top:314.59px;font-size:12.5px;color:#2a2a2a;letter-spacing:-0.3px">NONE</div>
<svg style="left:152px;top:331.5px" width="14" height="14" viewBox="0 0 14 14"><defs><radialGradient id="g7" cx="0.45" cy="0.3" r="0.75"><stop offset="0" stop-color="#9af070"/><stop offset="0.55" stop-color="#32b82c"/><stop offset="1" stop-color="#15801a"/></radialGradient></defs><circle cx="7" cy="7" r="6.6" fill="url(#g7)"/><path d="M4 7.2 L6.3 10.2 L10 3.6" fill="none" stroke="#fff" stroke-width="1.4"/></svg>
<div class="a" style="left:169.5px;top:330.51500000000004px;width:40px;height:15px;background:#2b2b2b;border:1px solid #b8b8b8"></div>
<div class="t " style="left:214.3px;top:332.13px;font-size:12.5px;color:#333;letter-spacing:-0.6px">7#</div>
<div class="t " style="left:229.3px;top:332.33px;font-size:12.5px;color:#2a2a2a;transform:scaleX(0.84);transform-origin:left">Sample</div>
<div class="t " style="left:270px;top:332.56px;font-size:12px;color:#2a2a2a;letter-spacing:-0.02px">2020/7/25 3:39:24</div>
<div class="t " style="left:373px;top:332.56px;font-size:12px;color:#2a2a2a;letter-spacing:-0.1px">D65/10°</div>
<div class="t " style="left:438px;top:332.56px;font-size:12px;color:#2a2a2a;letter-spacing:-0.45px">17.98</div>
<div class="t " style="left:493.8px;top:332.56px;font-size:12px;color:#2a2a2a;letter-spacing:-0.45px">-0.21</div>
<div class="t " style="left:549px;top:332.56px;font-size:12px;color:#2a2a2a;letter-spacing:-0.45px">-1.36</div>
<div class="t " style="left:604.5px;top:332.56px;font-size:12px;color:#2a2a2a;letter-spacing:-0.45px">-0.40</div>
<div class="t " style="left:660.3px;top:332.56px;font-size:12px;color:#2a2a2a;letter-spacing:-0.45px">-0.03</div>
<div class="t " style="left:715.2px;top:332.56px;font-size:12px;color:#2a2a2a;letter-spacing:-0.45px">-0.15</div>
<div class="t " style="left:770.7px;top:332.56px;font-size:12px;color:#2a2a2a;letter-spacing:-0.45px">0.43</div>
<div class="t " style="left:826.5px;top:332.13px;font-size:12.5px;color:#2a2a2a;letter-spacing:-0.3px">NONE</div>
<svg style="left:152px;top:349.1px" width="14" height="14" viewBox="0 0 14 14"><defs><radialGradient id="g8" cx="0.45" cy="0.3" r="0.75"><stop offset="0" stop-color="#9af070"/><stop offset="0.55" stop-color="#32b82c"/><stop offset="1" stop-color="#15801a"/></radialGradient></defs><circle cx="7" cy="7" r="6.6" fill="url(#g8)"/><path d="M4 7.2 L6.3 10.2 L10 3.6" fill="none" stroke="#fff" stroke-width="1.4"/></svg>
<div class="a" style="left:169.5px;top:348.06px;width:40px;height:15px;background:#2b2b2b;border:1px solid #b8b8b8"></div>
<div class="t " style="left:214.3px;top:349.68px;font-size:12.5px;color:#333;letter-spacing:-0.6px">8#</div>
<div class="t " style="left:229.3px;top:349.88px;font-size:12.5px;color:#2a2a2a;transform:scaleX(0.84);transform-origin:left">Sample</div>
<div class="t " style="left:270px;top:350.10px;font-size:12px;color:#2a2a2a;letter-spacing:-0.02px">2020/7/25 3:40:34</div>
<div class="t " style="left:373px;top:350.10px;font-size:12px;color:#2a2a2a;letter-spacing:-0.1px">D65/10°</div>
<div class="t " style="left:438px;top:350.10px;font-size:12px;color:#2a2a2a;letter-spacing:-0.45px">18.04</div>
<div class="t " style="left:493.8px;top:350.10px;font-size:12px;color:#2a2a2a;letter-spacing:-0.45px">-0.17</div>
<div class="t " style="left:549px;top:350.10px;font-size:12px;color:#2a2a2a;letter-spacing:-0.45px">-1.42</div>
<div class="t " style="left:604.5px;top:350.10px;font-size:12px;color:#2a2a2a;letter-spacing:-0.45px">-0.33</div>
<div class="t " style="left:660.3px;top:350.10px;font-size:12px;color:#2a2a2a;letter-spacing:-0.45px">0.01</div>
<div class="t " style="left:715.2px;top:350.10px;font-size:12px;color:#2a2a2a;letter-spacing:-0.45px">-0.21</div>
<div class="t " style="left:770.7px;top:350.10px;font-size:12px;color:#2a2a2a;letter-spacing:-0.45px">0.39</div>
<div class="t " style="left:826.5px;top:349.68px;font-size:12.5px;color:#2a2a2a;letter-spacing:-0.3px">NONE</div>
<svg style="left:152px;top:366.6px" width="14" height="14" viewBox="0 0 14 14"><defs><radialGradient id="g9" cx="0.45" cy="0.3" r="0.75"><stop offset="0" stop-color="#9af070"/><stop offset="0.55" stop-color="#32b82c"/><stop offset="1" stop-color="#15801a"/></radialGradient></defs><circle cx="7" cy="7" r="6.6" fill="url(#g9)"/><path d="M4 7.2 L6.3 10.2 L10 3.6" fill="none" stroke="#fff" stroke-width="1.4"/></svg>
<div class="a" style="left:169.5px;top:365.6050000000001px;width:40px;height:15px;background:#2b2b2b;border:1px solid #b8b8b8"></div>
<div class="t " style="left:214.3px;top:367.22px;font-size:12.5px;color:#333;letter-spacing:-0.6px">9#</div>
<div class="t " style="left:229.3px;top:367.42px;font-size:12.5px;color:#2a2a2a;transform:scaleX(0.84);transform-origin:left">Sample</div>
<div class="t " style="left:270px;top:367.65px;font-size:12px;color:#2a2a2a;letter-spacing:-0.02px">2020/7/25 3:41:34</div>
<div class="t " style="left:373px;top:367.65px;font-size:12px;color:#2a2a2a;letter-spacing:-0.1px">D65/10°</div>
<div class="t " style="left:438px;top:367.65px;font-size:12px;color:#2a2a2a;letter-spacing:-0.45px">17.87</div>
<div class="t " style="left:493.8px;top:367.65px;font-size:12px;color:#2a2a2a;letter-spacing:-0.45px">-0.18</div>
<div class="t " style="left:549px;top:367.65px;font-size:12px;color:#2a2a2a;letter-spacing:-0.45px">-1.40</div>
<div class="t " style="left:604.5px;top:367.65px;font-size:12px;color:#2a2a2a;letter-spacing:-0.45px">-0.51</div>
<div class="t " style="left:660.3px;top:367.65px;font-size:12px;color:#2a2a2a;letter-spacing:-0.45px">-0.01</div>
<div class="t " style="left:715.2px;top:367.65px;font-size:12px;color:#2a2a2a;letter-spacing:-0.45px">-0.19</div>
<div class="t " style="left:770.7px;top:367.65px;font-size:12px;color:#2a2a2a;letter-spacing:-0.45px">0.54</div>
<div class="t " style="left:827px;top:367.22px;font-size:12.5px;color:#2a2a2a;text-decoration:underline;text-decoration-color:#777;text-underline-offset:1.5px">Dark</div>
<svg style="left:152px;top:384.2px" width="14" height="14" viewBox="0 0 14 14"><defs><radialGradient id="g10" cx="0.45" cy="0.3" r="0.75"><stop offset="0" stop-color="#9af070"/><stop offset="0.55" stop-color="#32b82c"/><stop offset="1" stop-color="#15801a"/></radialGradient></defs><circle cx="7" cy="7" r="6.6" fill="url(#g10)"/><path d="M4 7.2 L6.3 10.2 L10 3.6" fill="none" stroke="#fff" stroke-width="1.4"/></svg>
<div class="a" style="left:169.5px;top:383.15000000000003px;width:40px;height:15px;background:#2b2b2b;border:1px solid #b8b8b8"></div>
<div class="t " style="left:214.3px;top:384.77px;font-size:12.5px;color:#333;letter-spacing:-0.6px">10#</div>
<div class="t " style="left:233.5px;top:384.97px;font-size:12.5px;color:#2a2a2a;transform:scaleX(0.84);transform-origin:left">Sampl</div>
<div class="t " style="left:270px;top:385.19px;font-size:12px;color:#2a2a2a;letter-spacing:-0.02px">2020/7/25 3:42:32</div>
<div class="t " style="left:373px;top:385.19px;font-size:12px;color:#2a2a2a;letter-spacing:-0.1px">D65/10°</div>
<div class="t " style="left:438px;top:385.19px;font-size:12px;color:#2a2a2a;letter-spacing:-0.45px">18.07</div>
<div class="t " style="left:493.8px;top:385.19px;font-size:12px;color:#2a2a2a;letter-spacing:-0.45px">-0.12</div>
<div class="t " style="left:549px;top:385.19px;font-size:12px;color:#2a2a2a;letter-spacing:-0.45px">-1.28</div>
<div class="t " style="left:604.5px;top:385.19px;font-size:12px;color:#2a2a2a;letter-spacing:-0.45px">-0.30</div>
<div class="t " style="left:660.3px;top:385.19px;font-size:12px;color:#2a2a2a;letter-spacing:-0.45px">0.05</div>
<div class="t " style="left:715.2px;top:385.19px;font-size:12px;color:#2a2a2a;letter-spacing:-0.45px">-0.07</div>
<div class="t " style="left:770.7px;top:385.19px;font-size:12px;color:#2a2a2a;letter-spacing:-0.45px">0.32</div>
<div class="t " style="left:826.5px;top:384.77px;font-size:12.5px;color:#2a2a2a;letter-spacing:-0.3px">NONE</div>
<svg style="left:0;top:0" width="1200" height="717" viewBox="0 0 1200 717"><line x1="150" y1="224.30" x2="906" y2="224.30" stroke="#333" stroke-width="1.4"/><line x1="150" y1="241.85" x2="906" y2="241.85" stroke="#333" stroke-width="1.4"/><line x1="150" y1="259.39" x2="906" y2="259.39" stroke="#333" stroke-width="1.4"/><line x1="150" y1="276.94" x2="906" y2="276.94" stroke="#333" stroke-width="1.4"/><line x1="150" y1="294.48" x2="906" y2="294.48" stroke="#333" stroke-width="1.4"/><line x1="150" y1="312.03" x2="906" y2="312.03" stroke="#333" stroke-width="1.4"/><line x1="150" y1="329.57" x2="906" y2="329.57" stroke="#333" stroke-width="1.4"/><line x1="150" y1="347.12" x2="906" y2="347.12" stroke="#333" stroke-width="1.4"/><line x1="150" y1="364.66" x2="906" y2="364.66" stroke="#333" stroke-width="1.4"/><line x1="150" y1="382.21" x2="906" y2="382.21" stroke="#333" stroke-width="1.4"/><line x1="150" y1="399.75" x2="906" y2="399.75" stroke="#333" stroke-width="1.4"/><line x1="168.25" y1="206.40" x2="168.25" y2="400" stroke="#333" stroke-width="1.4"/><line x1="210.75" y1="206.40" x2="210.75" y2="400" stroke="#333" stroke-width="1.4"/><line x1="266.25" y1="206.40" x2="266.25" y2="400" stroke="#333" stroke-width="1.4"/><line x1="368.75" y1="206.40" x2="368.75" y2="400" stroke="#333" stroke-width="1.4"/><line x1="433.75" y1="206.40" x2="433.75" y2="400" stroke="#333" stroke-width="1.4"/><line x1="489.50" y1="206.40" x2="489.50" y2="400" stroke="#333" stroke-width="1.4"/><line x1="545.00" y1="206.40" x2="545.00" y2="400" stroke="#333" stroke-width="1.4"/><line x1="600.50" y1="206.40" x2="600.50" y2="400" stroke="#333" stroke-width="1.4"/><line x1="655.75" y1="206.40" x2="655.75" y2="400" stroke="#333" stroke-width="1.4"/><line x1="712.00" y1="206.40" x2="712.00" y2="400" stroke="#333" stroke-width="1.4"/><line x1="767.40" y1="206.40" x2="767.40" y2="400" stroke="#333" stroke-width="1.4"/><line x1="822.70" y1="206.40" x2="822.70" y2="400" stroke="#333" stroke-width="1.4"/><line x1="878.00" y1="206.40" x2="878.00" y2="400" stroke="#333" stroke-width="1.4"/></svg>
<div class="a" style="left:150px;top:206.1px;width:756px;height:1px;background:#d8d8d8"></div>
<div class="t " style="left:175.3px;top:188.45px;font-size:14px;color:#222;text-decoration:underline;text-decoration-color:#8a8a8a;text-decoration-thickness:1.5px;text-underline-offset:1.6px">Simu</div>
<div class="t " style="left:218px;top:188.45px;font-size:14px;color:#222;text-decoration:underline;text-decoration-color:#8a8a8a;text-decoration-thickness:1.5px;text-underline-offset:1.6px">Name</div>
<div class="t " style="left:271.7px;top:188.45px;font-size:14px;color:#222;text-decoration:underline;text-decoration-color:#8a8a8a;text-decoration-thickness:1.5px;text-underline-offset:1.6px">Date time</div>
<div class="t " style="left:373px;top:188.45px;font-size:14px;color:#222;text-decoration:underline;text-decoration-color:#8a8a8a;text-decoration-thickness:1.5px;text-underline-offset:1.6px">Observer</div>
<div class="t " style="left:438.5px;top:190.64px;font-size:12px;color:#333;">L*</div>
<div class="t " style="left:494.5px;top:190.64px;font-size:12px;color:#333;">a*</div>
<div class="t " style="left:550px;top:190.64px;font-size:12px;color:#333;">b*</div>
<div class="t " style="left:605.5px;top:190.64px;font-size:12px;color:#333;">ΔL*</div>
<div class="t " style="left:661.2px;top:190.64px;font-size:12px;color:#333;">Δa*</div>
<div class="t " style="left:716.6px;top:190.64px;font-size:12px;color:#333;">Δb*</div>
<div class="t " style="left:772.3px;top:190.64px;font-size:12px;color:#333;">ΔE*ab</div>
<div class="t " style="left:823.4px;top:189.34px;font-size:12px;color:#222;text-decoration:underline;text-decoration-color:#8a8a8a;text-decoration-thickness:1.5px;text-underline-offset:1.6px">Color bias</div>
<div class="a" style="left:907px;top:85px;width:290.5px;height:600px;background:#fff"></div>
<svg style="left:908.5px;top:87px" width="19" height="19" viewBox="0 0 19 19" fill="none" stroke="#444" stroke-width="1.2"><circle cx="9" cy="9" r="8.2"/><path d="M5.5 10.8 L9 7.3 L12.5 10.8" stroke-width="1.8"/></svg>
<div class="t " style="left:932px;top:89.20px;font-size:13px;color:#333;">Chromatic aberration</div>
<div class="a" style="left:914px;top:111px;width:277.5px;height:377.5px;background:#fff;border:1px solid #a8a8a8;border-right:1.5px solid #a8a8a8;border-bottom:1.5px solid #a8a8a8"></div>
<div class="t " style="left:1005.5px;top:113.69px;font-size:11px;color:#222;font-weight:bold">CIE LAB, D65/10°</div>
<div class="t " style="left:920.5px;top:141.70px;font-size:13px;color:#222;">Samples</div>
<div class="t " style="left:981.5px;top:141.70px;font-size:13px;color:#222;">0# Samples</div>
<div class="a" style="left:919.5px;top:169.75px;width:267px;height:16.25px;background:#008b8b"></div>
<div class="a" style="left:919.5px;top:186.0px;width:267px;height:47.400000000000006px;background:#add8e6"></div>
<div class="a" style="left:919.5px;top:201.3px;width:267px;height:1px;background:#b9dfe9"></div>
<div class="a" style="left:919.5px;top:217.1px;width:267px;height:1px;background:#b9dfe9"></div>
<div class="t " style="left:968.75px;top:170.40px;font-size:13px;color:#0d1b1b;text-decoration:underline;text-underline-offset:2.5px;text-decoration-thickness:1.3px">Samples</div>
<div class="t " style="left:1035px;top:170.40px;font-size:13px;color:#0d1b1b;text-decoration:underline;text-underline-offset:2.5px;text-decoration-thickness:1.3px">Least</div>
<div class="t " style="left:1091.3px;top:170.40px;font-size:13px;color:#0d1b1b;text-decoration:underline;text-underline-offset:2.5px;text-decoration-thickness:1.3px">MAX</div>
<div class="t " style="left:1142px;top:170.40px;font-size:13px;color:#0d1b1b;text-decoration:underline;text-underline-offset:2.5px;text-decoration-thickness:1.3px">Scope</div>
<div class="t " style="left:920.5px;top:190.47px;font-size:11.5px;color:#111;font-weight:bold">L*</div>
<div class="t " style="left:977.3px;top:189.62px;font-size:12.5px;color:#333;letter-spacing:-0.3px">18.37</div>
<div class="t " style="left:1034.5px;top:189.62px;font-size:12.5px;color:#333;letter-spacing:-0.3px">17.567</div>
<div class="t " style="left:1092.1px;top:189.62px;font-size:12.5px;color:#333;letter-spacing:-0.3px">18.418</div>
<div class="t " style="left:1149.1px;top:189.62px;font-size:12.5px;color:#333;letter-spacing:-0.3px">0.851</div>
<div class="t " style="left:920.5px;top:206.27px;font-size:11.5px;color:#111;font-weight:bold">a*</div>
<div class="t " style="left:977.3px;top:205.42px;font-size:12.5px;color:#333;letter-spacing:-0.3px">-0.18</div>
<div class="t " style="left:1034.5px;top:205.42px;font-size:12.5px;color:#333;letter-spacing:-0.3px">-0.221</div>
<div class="t " style="left:1092.1px;top:205.42px;font-size:12.5px;color:#333;letter-spacing:-0.3px">-0.123</div>
<div class="t " style="left:1149.1px;top:205.42px;font-size:12.5px;color:#333;letter-spacing:-0.3px">0.098</div>
<div class="t " style="left:920.5px;top:222.07px;font-size:11.5px;color:#111;font-weight:bold">b*</div>
<div class="t " style="left:977.3px;top:221.22px;font-size:12.5px;color:#333;letter-spacing:-0.3px">-1.21</div>
<div class="t " style="left:1034.5px;top:221.22px;font-size:12.5px;color:#333;letter-spacing:-0.3px">-1.439</div>
<div class="t " style="left:1092.1px;top:221.22px;font-size:12.5px;color:#333;letter-spacing:-0.3px">-1.213</div>
<div class="t " style="left:1149.1px;top:221.22px;font-size:12.5px;color:#333;letter-spacing:-0.3px">0.226</div>
<div class="a" style="left:919.5px;top:248px;width:267px;height:15.5px;background:#008b8b"></div>
<div class="a" style="left:919.5px;top:263.5px;width:267px;height:64.0px;background:#add8e6"></div>
<div class="a" style="left:919.5px;top:279.0px;width:267px;height:1px;background:#b9dfe9"></div>
<div class="a" style="left:919.5px;top:295.0px;width:267px;height:1px;background:#b9dfe9"></div>
<div class="a" style="left:919.5px;top:311.0px;width:267px;height:1px;background:#b9dfe9"></div>
<div class="t " style="left:971.4px;top:247.90px;font-size:13px;color:#0d1b1b;text-decoration:underline;text-underline-offset:2.5px;text-decoration-thickness:1.3px">Least</div>
<div class="t " style="left:1032.3px;top:247.90px;font-size:13px;color:#0d1b1b;text-decoration:underline;text-underline-offset:2.5px;text-decoration-thickness:1.3px">MAX</div>
<div class="t " style="left:1086.7px;top:247.90px;font-size:13px;color:#0d1b1b;text-decoration:underline;text-underline-offset:2.5px;text-decoration-thickness:1.3px">Scope</div>
<div class="t " style="left:1134.2px;top:247.90px;font-size:13px;color:#0d1b1b;text-decoration:underline;text-underline-offset:2.5px;text-decoration-thickness:1.3px">Average</div>
<div class="t " style="left:920.5px;top:267.97px;font-size:11.5px;color:#111;font-weight:bold">ΔL*</div>
<div class="t " style="left:977.3px;top:267.12px;font-size:12.5px;color:#333;letter-spacing:-0.3px">-0.807</div>
<div class="t " style="left:1034.5px;top:267.12px;font-size:12.5px;color:#333;letter-spacing:-0.3px">0.044</div>
<div class="t " style="left:1092.1px;top:267.12px;font-size:12.5px;color:#333;letter-spacing:-0.3px">0.851</div>
<div class="t " style="left:1149.1px;top:267.12px;font-size:12.5px;color:#333;letter-spacing:-0.3px">-0.484</div>
<div class="t " style="left:920.5px;top:283.97px;font-size:11.5px;color:#111;font-weight:bold">Δa*</div>
<div class="t " style="left:977.3px;top:283.12px;font-size:12.5px;color:#333;letter-spacing:-0.3px">-0.046</div>
<div class="t " style="left:1034.5px;top:283.12px;font-size:12.5px;color:#333;letter-spacing:-0.3px">0.052</div>
<div class="t " style="left:1092.1px;top:283.12px;font-size:12.5px;color:#333;letter-spacing:-0.3px">0.098</div>
<div class="t " style="left:1149.1px;top:283.12px;font-size:12.5px;color:#333;letter-spacing:-0.3px">-0.011</div>
<div class="t " style="left:920.5px;top:299.97px;font-size:11.5px;color:#111;font-weight:bold">Δb*</div>
<div class="t " style="left:977.3px;top:299.12px;font-size:12.5px;color:#333;letter-spacing:-0.3px">-0.228</div>
<div class="t " style="left:1034.5px;top:299.12px;font-size:12.5px;color:#333;letter-spacing:-0.3px">-0.003</div>
<div class="t " style="left:1092.1px;top:299.12px;font-size:12.5px;color:#333;letter-spacing:-0.3px">0.226</div>
<div class="t " style="left:1149.1px;top:299.12px;font-size:12.5px;color:#333;letter-spacing:-0.3px">-0.147</div>
<div class="t " style="left:920.5px;top:315.97px;font-size:11.5px;color:#111;font-weight:bold">ΔE*ab</div>
<div class="t " style="left:977.3px;top:315.12px;font-size:12.5px;color:#333;letter-spacing:-0.3px">0.052</div>
<div class="t " style="left:1034.5px;top:315.12px;font-size:12.5px;color:#333;letter-spacing:-0.3px">0.839</div>
<div class="t " style="left:1092.1px;top:315.12px;font-size:12.5px;color:#333;letter-spacing:-0.3px">0.787</div>
<div class="t " style="left:1149.1px;top:315.12px;font-size:12.5px;color:#333;letter-spacing:-0.3px">0.517</div>
<div class="a" style="left:138px;top:489px;width:769px;height:196px;background:#efefef"></div>
<div class="a" style="left:907px;top:489px;width:27px;height:5px;background:#fff"></div>
<div class="a" style="left:146.5px;top:497.8px;width:254px;height:184.5px;background:#fff;border:2px solid #0e8b8b"></div>
<svg style="left:0;top:0" width="1200" height="717" viewBox="0 0 1200 717"><line x1="188" y1="520" x2="310" y2="520" stroke="#efefef" stroke-width="1"/><line x1="188" y1="548.8" x2="310" y2="548.8" stroke="#efefef" stroke-width="1"/><line x1="188" y1="577.5" x2="310" y2="577.5" stroke="#efefef" stroke-width="1"/><line x1="188" y1="606.3" x2="310" y2="606.3" stroke="#efefef" stroke-width="1"/><line x1="188" y1="635" x2="310" y2="635" stroke="#efefef" stroke-width="1"/><line x1="191.6" y1="513" x2="191.6" y2="640" stroke="#efefef" stroke-width="1"/><line x1="220.2" y1="513" x2="220.2" y2="640" stroke="#efefef" stroke-width="1"/><line x1="248.8" y1="513" x2="248.8" y2="640" stroke="#efefef" stroke-width="1"/><line x1="277.4" y1="513" x2="277.4" y2="640" stroke="#efefef" stroke-width="1"/><line x1="306" y1="513" x2="306" y2="640" stroke="#efefef" stroke-width="1"/><line x1="352" y1="517.9" x2="392" y2="517.9" stroke="#efefef" stroke-width="1"/><line x1="352" y1="548" x2="392" y2="548" stroke="#efefef" stroke-width="1"/><line x1="352" y1="577.5" x2="392" y2="577.5" stroke="#efefef" stroke-width="1"/><line x1="352" y1="607.6" x2="392" y2="607.6" stroke="#efefef" stroke-width="1"/><line x1="352" y1="637.6" x2="392" y2="637.6" stroke="#efefef" stroke-width="1"/><line x1="186" y1="577.5" x2="311" y2="577.5" stroke="#555" stroke-width="1.6"/><line x1="248.8" y1="513.5" x2="248.8" y2="641" stroke="#555" stroke-width="1.6"/><line x1="372" y1="514.5" x2="372" y2="641" stroke="#666" stroke-width="1.6"/><circle cx="247.1" cy="577.5" r="4" fill="#7a7a7a"/><circle cx="247.7" cy="587.3" r="4" fill="#7a7a7a"/><circle cx="245.9" cy="583.8" r="4" fill="#7a7a7a"/><circle cx="246.5" cy="587.9" r="4" fill="#7a7a7a"/><circle cx="250.5" cy="590.7" r="4" fill="#7a7a7a"/><circle cx="248.8" cy="587.9" r="4" fill="#7a7a7a"/><circle cx="247.1" cy="584.4" r="4" fill="#7a7a7a"/><circle cx="247.1" cy="586.1" r="4" fill="#7a7a7a"/><circle cx="249.4" cy="589.6" r="4" fill="#7a7a7a"/><circle cx="248.2" cy="588.4" r="4" fill="#7a7a7a"/><circle cx="251.7" cy="581.5" r="4" fill="#7a7a7a"/><circle cx="372" cy="575.1" r="4.3" fill="#7a7a7a"/><circle cx="372" cy="608.6" r="4.3" fill="#7a7a7a"/><circle cx="372" cy="616.4" r="4.3" fill="#7a7a7a"/><circle cx="372" cy="620.0" r="4.3" fill="#7a7a7a"/><circle cx="372" cy="625.9" r="4.3" fill="#7a7a7a"/><circle cx="372" cy="618.8" r="4.3" fill="#7a7a7a"/><circle cx="372" cy="604.4" r="4.3" fill="#7a7a7a"/><circle cx="372" cy="601.4" r="4.3" fill="#7a7a7a"/><circle cx="372" cy="597.2" r="4.3" fill="#7a7a7a"/><circle cx="372" cy="608.0" r="4.3" fill="#7a7a7a"/><circle cx="372" cy="595.4" r="4.3" fill="#7a7a7a"/></svg>
<div class="t" style="right:1017.5px;top:514.5px;font-size:9.4px;color:#a4a4a4">1</div>
<div class="t" style="right:1017.5px;top:543.3px;font-size:9.4px;color:#a4a4a4">0.5</div>
<div class="t" style="right:1017.5px;top:572.0px;font-size:9.4px;color:#a4a4a4">0</div>
<div class="t" style="right:1017.5px;top:600.8px;font-size:9.4px;color:#a4a4a4">-0.5</div>
<div class="t" style="right:1017.5px;top:629.5px;font-size:9.4px;color:#a4a4a4">-1</div>
<div class="t" style="left:171.6px;width:40px;text-align:center;top:647px;font-size:9.4px;color:#a4a4a4">-1</div>
<div class="t" style="left:200.2px;width:40px;text-align:center;top:647px;font-size:9.4px;color:#a4a4a4">-0.5</div>
<div class="t" style="left:228.8px;width:40px;text-align:center;top:647px;font-size:9.4px;color:#a4a4a4">0</div>
<div class="t" style="left:257.4px;width:40px;text-align:center;top:647px;font-size:9.4px;color:#a4a4a4">0.5</div>
<div class="t" style="left:286px;width:40px;text-align:center;top:647px;font-size:9.4px;color:#a4a4a4">1</div>
<div class="t" style="left:228.8px;width:40px;text-align:center;top:655.5px;font-size:9.4px;color:#a4a4a4">Δa*</div>
<div class="t" style="left:141.8px;width:40px;text-align:center;top:572px;font-size:9.4px;color:#a4a4a4;transform:rotate(-90deg)">Δb*</div>
<div class="t" style="right:852.5px;top:512.4px;font-size:9.4px;color:#a4a4a4">1</div>
<div class="t" style="right:852.5px;top:542.5px;font-size:9.4px;color:#a4a4a4">0.5</div>
<div class="t" style="right:852.5px;top:572.0px;font-size:9.4px;color:#a4a4a4">0</div>
<div class="t" style="right:852.5px;top:602.1px;font-size:9.4px;color:#a4a4a4">-0.5</div>
<div class="t" style="right:852.5px;top:632.1px;font-size:9.4px;color:#a4a4a4">-1</div>
<div class="t" style="left:304.6px;width:40px;text-align:center;top:572px;font-size:9.4px;color:#a4a4a4;transform:rotate(-90deg)">ΔL*</div>
<div class="a" style="left:407px;top:495px;width:262.5px;height:189px;background:#fff"></div>
<svg style="left:0;top:0" width="1200" height="717" viewBox="0 0 1200 717"><line x1="432" y1="521.4" x2="658" y2="521.4" stroke="#efefef" stroke-width="1"/><line x1="432" y1="589.5" x2="658" y2="589.5" stroke="#efefef" stroke-width="1"/><line x1="432" y1="657.5" x2="658" y2="657.5" stroke="#efefef" stroke-width="1"/><line x1="434.4" y1="518" x2="434.4" y2="661" stroke="#efefef" stroke-width="1"/><line x1="450.1" y1="518" x2="450.1" y2="661" stroke="#efefef" stroke-width="1"/><line x1="465.8" y1="518" x2="465.8" y2="661" stroke="#efefef" stroke-width="1"/><line x1="481.5" y1="518" x2="481.5" y2="661" stroke="#efefef" stroke-width="1"/><line x1="497.2" y1="518" x2="497.2" y2="661" stroke="#efefef" stroke-width="1"/><line x1="512.9" y1="518" x2="512.9" y2="661" stroke="#efefef" stroke-width="1"/><line x1="528.5" y1="518" x2="528.5" y2="661" stroke="#efefef" stroke-width="1"/><line x1="544.2" y1="518" x2="544.2" y2="661" stroke="#efefef" stroke-width="1"/><line x1="559.9" y1="518" x2="559.9" y2="661" stroke="#efefef" stroke-width="1"/><line x1="575.6" y1="518" x2="575.6" y2="661" stroke="#efefef" stroke-width="1"/><line x1="591.3" y1="518" x2="591.3" y2="661" stroke="#efefef" stroke-width="1"/><line x1="607.0" y1="518" x2="607.0" y2="661" stroke="#efefef" stroke-width="1"/><line x1="622.7" y1="518" x2="622.7" y2="661" stroke="#efefef" stroke-width="1"/><line x1="638.4" y1="518" x2="638.4" y2="661" stroke="#efefef" stroke-width="1"/><line x1="654.1" y1="518" x2="654.1" y2="661" stroke="#efefef" stroke-width="1"/><path d="M434.4 650.7 C437.2 638.4 444.4 597.8 450.1 582.6 C455.7 567.5 460.1 571.0 465.8 566.3 C471.4 561.7 475.8 561.0 481.5 556.8 C487.1 552.6 491.5 542.4 497.2 543.2 C502.8 543.9 507.2 551.8 512.9 560.9 C518.5 569.9 522.9 586.7 528.5 593.5 C534.2 600.4 538.6 597.0 544.2 599.0 C549.9 600.9 554.3 607.1 559.9 604.4 C565.6 601.7 570.0 582.3 575.6 584.0 C581.3 585.7 588.5 608.6 591.3 613.9" fill="none" stroke="#2a8fdb" stroke-width="2"/><circle cx="434.4" cy="650.7" r="3.3" fill="#fff" stroke="#2a8fdb" stroke-width="1.6"/><circle cx="450.1" cy="582.6" r="3.3" fill="#fff" stroke="#2a8fdb" stroke-width="1.6"/><circle cx="465.8" cy="566.3" r="3.3" fill="#fff" stroke="#2a8fdb" stroke-width="1.6"/><circle cx="481.5" cy="556.8" r="3.3" fill="#fff" stroke="#2a8fdb" stroke-width="1.6"/><circle cx="497.2" cy="543.2" r="3.3" fill="#fff" stroke="#2a8fdb" stroke-width="1.6"/><circle cx="512.9" cy="560.9" r="3.3" fill="#fff" stroke="#2a8fdb" stroke-width="1.6"/><circle cx="528.5" cy="593.5" r="3.3" fill="#fff" stroke="#2a8fdb" stroke-width="1.6"/><circle cx="544.2" cy="599.0" r="3.3" fill="#fff" stroke="#2a8fdb" stroke-width="1.6"/><circle cx="559.9" cy="604.4" r="3.3" fill="#fff" stroke="#2a8fdb" stroke-width="1.6"/><circle cx="575.6" cy="584.0" r="3.3" fill="#fff" stroke="#2a8fdb" stroke-width="1.6"/><circle cx="591.3" cy="613.9" r="3.3" fill="#fff" stroke="#2a8fdb" stroke-width="1.6"/><circle cx="518.3" cy="509" r="5.6" fill="#fff" stroke="#3a9ee8" stroke-width="2.2"/></svg>
<div class="t " style="left:529px;top:503.97px;font-size:11.5px;color:#333;">ΔE*ab</div>
<div class="t" style="right:773px;top:515.9px;font-size:9.4px;color:#a4a4a4">1.0</div>
<div class="t" style="right:773px;top:584.0px;font-size:9.4px;color:#a4a4a4">0.5</div>
<div class="t" style="right:773px;top:652.0px;font-size:9.4px;color:#a4a4a4">0.0</div>
<div class="t" style="left:419.4px;width:30px;text-align:center;top:666px;font-size:9.4px;color:#a4a4a4">1</div>
<div class="t" style="left:435.1px;width:30px;text-align:center;top:666px;font-size:9.4px;color:#a4a4a4">2</div>
<div class="t" style="left:450.8px;width:30px;text-align:center;top:666px;font-size:9.4px;color:#a4a4a4">3</div>
<div class="t" style="left:466.5px;width:30px;text-align:center;top:666px;font-size:9.4px;color:#a4a4a4">4</div>
<div class="t" style="left:482.2px;width:30px;text-align:center;top:666px;font-size:9.4px;color:#a4a4a4">5</div>
<div class="t" style="left:497.9px;width:30px;text-align:center;top:666px;font-size:9.4px;color:#a4a4a4">6</div>
<div class="t" style="left:513.5px;width:30px;text-align:center;top:666px;font-size:9.4px;color:#a4a4a4">7</div>
<div class="t" style="left:529.2px;width:30px;text-align:center;top:666px;font-size:9.4px;color:#a4a4a4">8</div>
<div class="t" style="left:544.9px;width:30px;text-align:center;top:666px;font-size:9.4px;color:#a4a4a4">9</div>
<div class="t" style="left:560.6px;width:30px;text-align:center;top:666px;font-size:9.4px;color:#a4a4a4">10</div>
<div class="t" style="left:576.3px;width:30px;text-align:center;top:666px;font-size:9.4px;color:#a4a4a4">11</div>
<div class="t" style="left:592.0px;width:30px;text-align:center;top:666px;font-size:9.4px;color:#a4a4a4">12</div>
<div class="t" style="left:607.7px;width:30px;text-align:center;top:666px;font-size:9.4px;color:#a4a4a4">13</div>
<div class="t" style="left:623.4px;width:30px;text-align:center;top:666px;font-size:9.4px;color:#a4a4a4">14</div>
<div class="t" style="left:639.1px;width:30px;text-align:center;top:666px;font-size:9.4px;color:#a4a4a4">15</div>
<div class="a" style="left:673px;top:494px;width:261px;height:190px;background:#fff"></div>
<div class="a" style="left:934px;top:494.5px;width:4.5px;height:190.5px;background:#eaeaea"></div>
<svg style="left:0;top:0" width="1200" height="717" viewBox="0 0 1200 717"><line x1="706" y1="506.3" x2="920" y2="506.3" stroke="#efefef" stroke-width="1"/><line x1="706" y1="531.0" x2="920" y2="531.0" stroke="#efefef" stroke-width="1"/><line x1="706" y1="555.7" x2="920" y2="555.7" stroke="#efefef" stroke-width="1"/><line x1="706" y1="580.3" x2="920" y2="580.3" stroke="#efefef" stroke-width="1"/><line x1="706" y1="605.0" x2="920" y2="605.0" stroke="#efefef" stroke-width="1"/><line x1="706" y1="629.7" x2="920" y2="629.7" stroke="#efefef" stroke-width="1"/><line x1="706.0" y1="506" x2="706.0" y2="630" stroke="#efefef" stroke-width="1"/><line x1="741.6" y1="506" x2="741.6" y2="630" stroke="#efefef" stroke-width="1"/><line x1="777.2" y1="506" x2="777.2" y2="630" stroke="#efefef" stroke-width="1"/><line x1="812.8" y1="506" x2="812.8" y2="630" stroke="#efefef" stroke-width="1"/><line x1="848.4" y1="506" x2="848.4" y2="630" stroke="#efefef" stroke-width="1"/><line x1="884.0" y1="506" x2="884.0" y2="630" stroke="#efefef" stroke-width="1"/><line x1="919.6" y1="506" x2="919.6" y2="630" stroke="#efefef" stroke-width="1"/><path d="M706 596 L742 597 L777 598 L813 599 L849 600 L885 600.5 L900 601.5 L920 601 L920 629.7 L706 629.7 Z" fill="#7a978d"/><path d="M706 594.3 L722 594.5 L742 596 L777 597 L813 598.2 L849 599 L885 599.5 L920 599.5" fill="none" stroke="#4a4ab8" stroke-width="1.3"/><defs><linearGradient id="spec" x1="0" x2="1"><stop offset="0" stop-color="#ff00ff"/><stop offset="0.222" stop-color="#ff00ff"/><stop offset="0.226" stop-color="#2040ff"/><stop offset="0.24" stop-color="#00e8ff"/><stop offset="0.33" stop-color="#00ffff"/><stop offset="0.38" stop-color="#00ff40"/><stop offset="0.52" stop-color="#00ff00"/><stop offset="0.6" stop-color="#f0e000"/><stop offset="0.67" stop-color="#ff9000"/><stop offset="0.69" stop-color="#ff0000"/><stop offset="1" stop-color="#ff0000"/></linearGradient></defs><rect x="706" y="661.2" width="214" height="18.3" fill="url(#spec)"/></svg>
<div class="t" style="right:498px;top:500.8px;font-size:9.6px;color:#a4a4a4">10</div>
<div class="t" style="right:498px;top:525.5px;font-size:9.6px;color:#a4a4a4">8</div>
<div class="t" style="right:498px;top:550.2px;font-size:9.6px;color:#a4a4a4">6</div>
<div class="t" style="right:498px;top:574.8px;font-size:9.6px;color:#a4a4a4">4</div>
<div class="t" style="right:498px;top:599.5px;font-size:9.6px;color:#a4a4a4">2</div>
<div class="t" style="right:498px;top:624.2px;font-size:9.6px;color:#a4a4a4">0</div>
<div class="t" style="left:686.0px;width:40px;text-align:center;top:636px;font-size:9.6px;color:#a4a4a4">400</div>
<div class="t" style="left:721.6px;width:40px;text-align:center;top:636px;font-size:9.6px;color:#a4a4a4">450</div>
<div class="t" style="left:757.2px;width:40px;text-align:center;top:636px;font-size:9.6px;color:#a4a4a4">500</div>
<div class="t" style="left:792.8px;width:40px;text-align:center;top:636px;font-size:9.6px;color:#a4a4a4">550</div>
<div class="t" style="left:828.4px;width:40px;text-align:center;top:636px;font-size:9.6px;color:#a4a4a4">600</div>
<div class="t" style="left:864.0px;width:40px;text-align:center;top:636px;font-size:9.6px;color:#a4a4a4">650</div>
<div class="t" style="left:899.6px;width:40px;text-align:center;top:636px;font-size:9.6px;color:#a4a4a4">700</div>
<div class="t" style="left:665.5px;width:40px;text-align:center;top:563px;font-size:9.4px;color:#a4a4a4;transform:rotate(-90deg)">R%</div>
<div class="t " style="left:802.5px;top:644.15px;font-size:14px;color:#a4a4a4;">λ</div>
<div class="t " style="left:814px;top:645.96px;font-size:9.5px;color:#a4a4a4;">(nm)</div>
<div class="a" style="left:938.5px;top:494px;width:258.5px;height:191px;background:#fff"></div>
<svg style="left:0;top:0" width="1200" height="717" viewBox="0 0 1200 717"><defs><linearGradient id="lg" x1="0" y1="0" x2="0" y2="1"><stop offset="0" stop-color="#fff"/><stop offset="1" stop-color="#000"/></linearGradient></defs><line x1="1012" y1="542.4" x2="1139" y2="542.4" stroke="#efefef"/><line x1="1012" y1="562.7" x2="1139" y2="562.7" stroke="#efefef"/><line x1="1012" y1="603.5" x2="1139" y2="603.5" stroke="#efefef"/><line x1="1012" y1="623.5" x2="1139" y2="623.5" stroke="#efefef"/><line x1="1018.8" y1="537" x2="1018.8" y2="630" stroke="#efefef"/><line x1="1047.2" y1="537" x2="1047.2" y2="630" stroke="#efefef"/><line x1="1104" y1="537" x2="1104" y2="630" stroke="#efefef"/><line x1="1132.6" y1="537" x2="1132.6" y2="630" stroke="#efefef"/><rect x="994.7" y="531" width="7.8" height="93" fill="url(#lg)"/></svg>
<div class="a" style="left:1018px;top:543px;width:115px;height:81px;clip-path:polygon(57.7px 0.5px,98.0px 12.0px,114.6px 40.3px,98.0px 68.6px,57.7px 80.0px,17.4px 68.6px,0.8px 40.3px,17.4px 12.0px);background:radial-gradient(ellipse 52px 36px at 57.7px 40.3px,rgba(255,255,255,0.9),rgba(255,255,255,0)),conic-gradient(from 90deg at 57.7px 40.3px,#ff3838,#a83ca8 12.5%,#4a3ae8 25%,#30f0f0 37.5%,#30a050 50%,#b0e850 62.5%,#fff040 75%,#ffa040 87.5%,#ff3838)"></div>
<svg style="left:0;top:0" width="1200" height="717" viewBox="0 0 1200 717"><line x1="1012" y1="583.3" x2="1139" y2="583.3" stroke="#111" stroke-width="1.3"/><line x1="1075.7" y1="536.8" x2="1075.7" y2="629.5" stroke="#111" stroke-width="1.3"/><path d="M1075.7 576 L1083 583.3 L1075.7 590.6 L1068.4 583.3 Z" fill="#0000ff"/><circle cx="1075.7" cy="583.3" r="5.3" fill="#66ee22"/><path d="M1021.5 521 L1028.2 527.8 L1021.5 534.6 L1014.8 527.8 Z" fill="#0000ff"/><circle cx="1097.5" cy="527.8" r="6.7" fill="#66ee22"/></svg>
<div class="t " style="left:1032px;top:521.42px;font-size:12.5px;color:#333;">Standard</div>
<div class="t " style="left:1105.8px;top:521.42px;font-size:12.5px;color:#333;">Sample</div>
<div class="t" style="right:209.29999999999995px;top:525.7px;font-size:9.6px;color:#a4a4a4">100</div>
<div class="t" style="right:209.29999999999995px;top:544.4px;font-size:9.6px;color:#a4a4a4">80</div>
<div class="t" style="right:209.29999999999995px;top:563.1px;font-size:9.6px;color:#a4a4a4">60</div>
<div class="t" style="right:209.29999999999995px;top:581.8px;font-size:9.6px;color:#a4a4a4">40</div>
<div class="t" style="right:209.29999999999995px;top:600.5px;font-size:9.6px;color:#a4a4a4">20</div>
<div class="t" style="right:209.29999999999995px;top:619.2px;font-size:9.6px;color:#a4a4a4">0</div>
<div class="t" style="left:998.8px;width:40px;text-align:center;top:635px;font-size:9.6px;color:#a4a4a4">-100</div>
<div class="t" style="left:1027.2px;width:40px;text-align:center;top:635px;font-size:9.6px;color:#a4a4a4">-50</div>
<div class="t" style="left:1055.7px;width:40px;text-align:center;top:635px;font-size:9.6px;color:#a4a4a4">0</div>
<div class="t" style="left:1084px;width:40px;text-align:center;top:635px;font-size:9.6px;color:#a4a4a4">50</div>
<div class="t" style="left:1112.6px;width:40px;text-align:center;top:635px;font-size:9.6px;color:#a4a4a4">100</div>
<div class="t" style="left:1143.3px;top:536.9px;font-size:9.6px;color:#a4a4a4">100</div>
<div class="t" style="left:1143.3px;top:557.2px;font-size:9.6px;color:#a4a4a4">50</div>
<div class="t" style="left:1143.3px;top:577.8px;font-size:9.6px;color:#a4a4a4">0</div>
<div class="t" style="left:1143.3px;top:598.1px;font-size:9.6px;color:#a4a4a4">-50</div>
<div class="t" style="left:1143.3px;top:618.1px;font-size:9.6px;color:#a4a4a4">-100</div>
<div class="t" style="left:950px;width:40px;text-align:center;top:573px;font-size:9.4px;color:#a4a4a4;transform:rotate(-90deg)">L*</div>
<div class="t" style="left:1148.3px;width:40px;text-align:center;top:578px;font-size:9.4px;color:#a4a4a4;transform:rotate(90deg)">b*</div>
<div class="t" style="left:1055.7px;width:40px;text-align:center;top:643px;font-size:9.4px;color:#a4a4a4">a*</div>
<div class="a" style="left:2px;top:685px;width:1195.5px;height:30.4px;background:#efeceb"></div>
<div class="t " style="left:6px;top:696.54px;font-size:12px;color:#222;">OK</div>
<div class="a" style="left:1091.7px;top:688.6px;width:46px;height:24px;border:1px solid #c4c4c4;border-bottom-color:#dcdcdc"></div>
<div class="t " style="left:1098.5px;top:696.14px;font-size:12px;color:#222;letter-spacing:0.3px">AUTO</div>
<div class="a" style="left:1140.3px;top:688.6px;width:54.5px;height:24px;border:1px solid #c4c4c4;border-bottom-color:#dcdcdc"></div>
<div class="t " style="left:10px;top:27.10px;font-size:15px;color:#303030;letter-spacing:0.25px">File</div>
<div class="t " style="left:45px;top:27.10px;font-size:15px;color:#303030;letter-spacing:0.25px">Instrument</div>
<div class="t " style="left:133px;top:27.10px;font-size:15px;color:#303030;letter-spacing:0.25px">Measurement</div>
<div class="t " style="left:242px;top:27.10px;font-size:15px;color:#303030;letter-spacing:0.25px">Sample storage management</div>
<div class="t " style="left:461px;top:27.10px;font-size:15px;color:#303030;letter-spacing:0.25px">Data</div>
<div class="t " style="left:508px;top:27.10px;font-size:15px;color:#303030;letter-spacing:0.25px">Install</div>
<div class="t " style="left:564px;top:27.10px;font-size:15px;color:#303030;letter-spacing:0.25px">Color card matching inspection</div>
<div class="t " style="left:795px;top:27.10px;font-size:15px;color:#303030;letter-spacing:0.25px">Help</div>
<div class="a" style="left:0px;top:43.5px;width:2px;height:674px;background:#3275ae"></div>
<div class="a" style="left:1197.5px;top:27px;width:2.5px;height:690px;background:#11609a"></div>
<div class="a" style="left:0px;top:715.4px;width:1200px;height:1.6px;background:#2d73a8"></div></body></html>
